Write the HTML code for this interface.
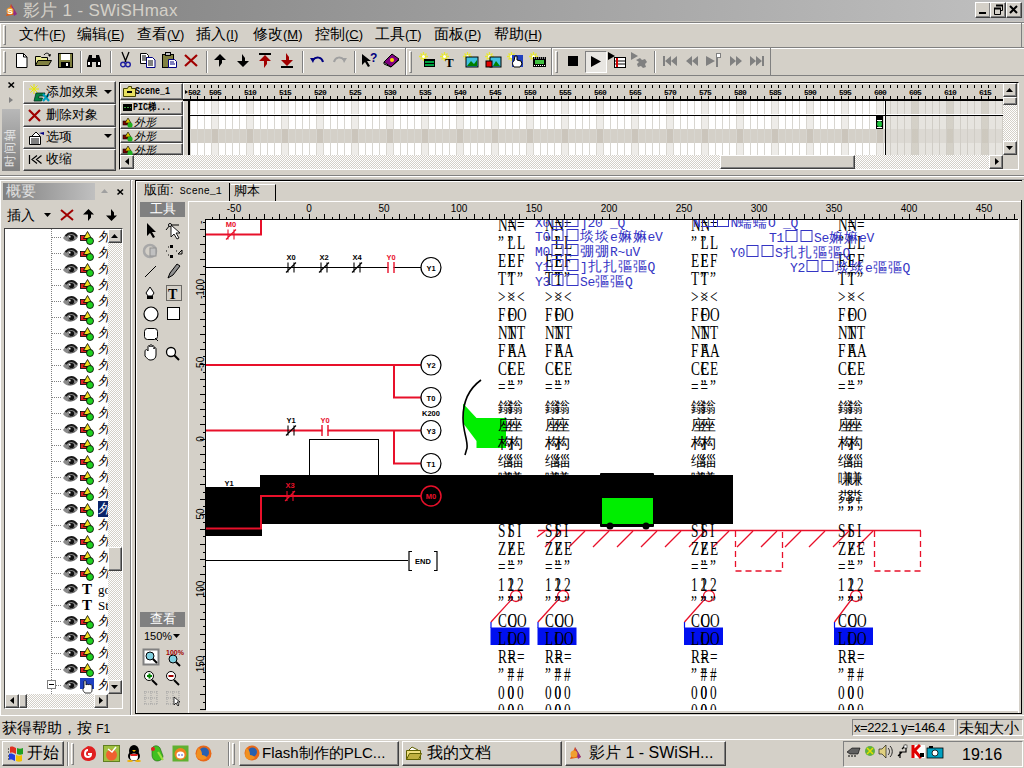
<!DOCTYPE html>
<html><head><meta charset="utf-8">
<style>
*{margin:0;padding:0;box-sizing:border-box}
html,body{width:1024px;height:768px;overflow:hidden;background:#d4d0c8;font-family:"Liberation Sans",sans-serif;font-size:12px;color:#000}
.a{position:absolute}
.rb{position:absolute;background:#d4d0c8;border:1px solid;border-color:#fff #404040 #404040 #fff;box-shadow:inset -1px -1px 0 #808080}
.sk{position:absolute;border:1px solid;border-color:#808080 #fff #fff #808080}
.grip{position:absolute;width:3px;border-left:1px solid #fff;border-top:1px solid #fff;border-right:1px solid #808080;border-bottom:1px solid #808080}
.sep{position:absolute;width:2px;border-left:1px solid #808080;border-right:1px solid #fff}
.t{position:absolute;white-space:nowrap;line-height:1}
svg{position:absolute;overflow:visible}
.tt{font-size:13px}
.tl{font-size:9px;font-family:"Liberation Mono",monospace}
.it{font-style:italic;font-size:11px;font-family:"Liberation Sans",sans-serif}
.fl{top:89px;font-size:8px;font-weight:bold;font-family:"Liberation Mono",monospace;letter-spacing:-0.8px;color:#000}
.fr{background-image:linear-gradient(to right,rgba(0,0,0,0) 22px,rgba(160,150,130,0.18) 22px 28px,rgba(0,0,0,0) 28px),linear-gradient(to right,#d8d6d0 1px,transparent 1px);background-size:35px 100%,7px 100%;}
.fr2{background-image:linear-gradient(to right,rgba(0,0,0,0) 27px,rgba(160,150,130,0.25) 27px 33px,rgba(0,0,0,0) 33px),linear-gradient(to right,#d0cdc6 1px,transparent 1px);background-size:35px 100%,7px 100%;background-position:0 0,5px 0}
.rl{font-size:10px;color:#000}
.lb{font-size:7.5px;font-weight:bold;font-family:"Liberation Sans",sans-serif}
.gs{font-family:"Liberation Serif",serif;font-size:18px;fill:#000}
.gc{font-family:"Liberation Serif",serif;font-size:15px;fill:#000}
.bc{font-size:14px;fill:#3434c4}
.bt{font-family:"Liberation Mono",monospace;font-size:13px;fill:#3434c4}
.mn{top:26px;font-size:15px}
.mn i{font-style:normal;font-size:13px;font-family:"Liberation Sans",sans-serif}
.hatch{background-color:#d4d0c8;background-image:repeating-conic-gradient(#fff 0 25%,#d4d0c8 0 50%);background-size:2px 2px}
</style></head><body>
<!-- TITLE BAR -->
<div class="a" style="left:0;top:0;width:1024px;height:21px;background:linear-gradient(to right,#808080,#c0c0c0)"></div>
<svg style="left:3px;top:2px" width="17" height="17" viewBox="0 0 17 17"><path d="M3 14 L8 2 L14 12 Z" fill="#e05a10"/><path d="M8 2 L14 12 L11 14Z" fill="#8a2d8a"/><circle cx="7" cy="9" r="3.5" fill="#f0a030"/><text x="4.5" y="12" font-size="8" font-weight="bold" fill="#fff" font-family="Liberation Sans">S</text></svg>
<div class="t" style="left:23px;top:2px;font-size:17px;color:#d4d0c8;letter-spacing:0.3px">影片 1 - SWiSHmax</div>
<div class="rb" style="left:975px;top:2px;width:16px;height:16px"></div>
<div class="rb" style="left:990px;top:2px;width:16px;height:16px"></div>
<div class="rb" style="left:1006px;top:2px;width:16px;height:16px"></div>
<div class="a" style="left:979px;top:12px;width:7px;height:2px;background:#000"></div>
<svg style="left:992px;top:4px" width="12" height="12"><path d="M4.5 1.5h6v5h-2M2.5 4.5h6v6h-6z" fill="none" stroke="#000" stroke-width="1"/><path d="M4 1.5h7M2 4.5h7" stroke="#000" stroke-width="2"/></svg>
<svg style="left:1009px;top:5px" width="10" height="10"><path d="M1 1L8 8M8 1L1 8" stroke="#000" stroke-width="2"/></svg>
<!-- MENU BAR -->
<div class="a" style="left:0;top:21px;width:1024px;height:1px;background:#c8c5bf"></div>
<div class="a" style="left:0;top:22px;width:1024px;height:1px;background:#808080"></div>
<div class="a" style="left:0;top:23px;width:1024px;height:25px;border-top:1px solid #fff;border-bottom:1px solid #808080;border-left:1px solid #fff"></div>
<div class="grip" style="left:3px;top:25px;height:20px"></div>
<div class="t mn" style="left:19px">文件<i>(<u>F</u>)</i></div>
<div class="t mn" style="left:77px">编辑<i>(<u>E</u>)</i></div>
<div class="t mn" style="left:137px">查看<i>(<u>V</u>)</i></div>
<div class="t mn" style="left:196px">插入<i>(<u>I</u>)</i></div>
<div class="t mn" style="left:253px">修改<i>(<u>M</u>)</i></div>
<div class="t mn" style="left:315px">控制<i>(<u>C</u>)</i></div>
<div class="t mn" style="left:375px">工具<i>(<u>T</u>)</i></div>
<div class="t mn" style="left:434px">面板<i>(<u>P</u>)</i></div>
<div class="t mn" style="left:494px">帮助<i>(<u>H</u>)</i></div>
<div class="a" style="left:1021px;top:23px;width:1px;height:24px;background:#808080"></div>
<!-- TOOLBAR -->
<div class="a" style="left:0;top:48px;width:1024px;height:28px;border-top:1px solid #fff;border-bottom:1px solid #808080"></div>
<div class="a" style="left:0;top:48px;width:1px;height:27px;background:#fff"></div>
<div class="a" style="left:405px;top:48px;width:1px;height:27px;background:#808080"></div>
<div class="a" style="left:406px;top:48px;width:1px;height:27px;background:#fff"></div>
<div class="a" style="left:551px;top:48px;width:1px;height:27px;background:#808080"></div>
<div class="a" style="left:552px;top:48px;width:1px;height:27px;background:#fff"></div>
<div class="a" style="left:770px;top:48px;width:1px;height:27px;background:#808080"></div>
<div class="grip" style="left:3px;top:51px;height:22px"></div>
<div class="grip" style="left:409px;top:51px;height:22px"></div>
<div class="grip" style="left:555px;top:51px;height:22px"></div>
<div class="sep" style="left:80px;top:51px;height:22px"></div>
<div class="sep" style="left:110px;top:51px;height:22px"></div>
<div class="sep" style="left:206px;top:51px;height:22px"></div>
<div class="sep" style="left:302px;top:51px;height:22px"></div>
<div class="sep" style="left:354px;top:51px;height:22px"></div>
<div class="sep" style="left:654px;top:51px;height:22px"></div>
<div id="tbicons">
<!-- new -->
<svg style="left:16px;top:53px" width="12" height="15"><path d="M0.5 0.5h7l3.5 3.5v10.5h-10.5z" fill="#fff" stroke="#000"/><path d="M7.5 0.5v3.5h3.5" fill="none" stroke="#000"/></svg>
<!-- open -->
<svg style="left:35px;top:52px" width="17" height="16"><path d="M0.5 4.5h5l1 1h6v8h-12z" fill="#e8e890" stroke="#000"/><path d="M3 8.5h13.5l-3 5h-13z" fill="#808040" stroke="#000"/><path d="M9 3c2-3 5-2 6 1" fill="none" stroke="#000"/><path d="M13 3l2 2 1-3" fill="#000"/></svg>
<!-- save -->
<svg style="left:58px;top:53px" width="15" height="15"><rect x="0.5" y="0.5" width="14" height="14" fill="#808040" stroke="#000"/><rect x="3" y="1" width="9" height="6" fill="#fff"/><rect x="3" y="9" width="9" height="5" fill="#000"/><rect x="8" y="10" width="2" height="3" fill="#fff"/></svg>
<!-- binoculars -->
<svg style="left:86px;top:53px" width="17" height="15"><path d="M1 14V8l2-6h3v12zM10 14V2h3l2 6v6z" fill="#000"/><rect x="6" y="5" width="4" height="4" fill="#000"/><rect x="2" y="9" width="2" height="3" fill="#fff"/><rect x="12" y="9" width="2" height="3" fill="#fff"/></svg>
<!-- scissors -->
<svg style="left:120px;top:52px" width="11" height="16"><path d="M2 0L6 10M9 0L5 10" stroke="#000" stroke-width="1.3"/><circle cx="3" cy="12.5" r="2.3" fill="none" stroke="#2020a0" stroke-width="1.4"/><circle cx="8" cy="12.5" r="2.3" fill="none" stroke="#2020a0" stroke-width="1.4"/></svg>
<!-- copy -->
<svg style="left:140px;top:53px" width="16" height="15"><path d="M0.5 0.5h6l2 2v8h-8z" fill="#fff" stroke="#000"/><path d="M6.5 4.5h6l2.5 2.5v7.5h-8.5z" fill="#fff" stroke="#000080"/><path d="M2 3h4M2 5h5M2 7h5M8 8h5M8 10h5M8 12h5" stroke="#000" stroke-width="1"/></svg>
<!-- paste -->
<svg style="left:162px;top:52px" width="15" height="16"><rect x="0.5" y="2.5" width="11" height="13" fill="#808040" stroke="#000"/><rect x="3.5" y="0.5" width="5" height="3" fill="#c0c0c0" stroke="#000"/><path d="M6.5 7.5h6l2 2v6h-8z" fill="#fff" stroke="#000080"/><path d="M8 10h4M8 12h5" stroke="#000080"/></svg>
<!-- delete -->
<svg style="left:184px;top:54px" width="14" height="13"><path d="M1 1L13 12M13 1L1 12" stroke="#a00000" stroke-width="2.2"/></svg>
<!-- up -->
<svg style="left:214px;top:54px" width="12" height="13"><path d="M6 0L12 6H8v3l-3 4V6H0z" fill="#000"/></svg>
<!-- down -->
<svg style="left:237px;top:54px" width="12" height="13"><path d="M6 13L12 7H8V4L5 0v7H0z" fill="#000"/></svg>
<!-- up top -->
<svg style="left:259px;top:53px" width="12" height="15"><rect x="0" y="0" width="12" height="2" fill="#000"/><path d="M6 2L12 8H8v3l-3 4V8H0z" fill="#a00000"/></svg>
<!-- down bottom -->
<svg style="left:281px;top:53px" width="12" height="15"><rect x="0" y="13" width="12" height="2" fill="#000"/><path d="M6 13L12 7H8V4L5 0v7H0z" fill="#a00000"/></svg>
<!-- undo -->
<svg style="left:310px;top:56px" width="14" height="10"><path d="M3 4c3-4 9-3 10 2" fill="none" stroke="#000080" stroke-width="2"/><path d="M0 2l5 0 -2 5z" fill="#000080"/></svg>
<!-- redo -->
<svg style="left:333px;top:56px" width="14" height="10"><path d="M11 4c-3-4-9-3-10 2" fill="none" stroke="#a0a0a0" stroke-width="2"/><path d="M14 2l-5 0 2 5z" fill="#a0a0a0"/></svg>
<!-- help arrow -->
<svg style="left:362px;top:52px" width="16" height="16"><path d="M0 2v11l3-3 3 5 2-1-3-5h4z" fill="#000"/><text x="8" y="10" font-size="12" font-weight="bold" fill="#000080" font-family="Liberation Sans">?</text></svg>
<!-- book -->
<svg style="left:383px;top:53px" width="17" height="15"><path d="M1 9L9 1l7 5-8 8z" fill="#800080" stroke="#000"/><path d="M1 9v2l7 3 8-7" fill="none" stroke="#000"/><circle cx="9" cy="7" r="2" fill="#ffd700"/></svg>
<!-- add text sparkles icons -->
<svg style="left:419px;top:52px" width="17" height="16"><path d="M4.5 0v9M0 4.5h9M1.5 1.5l6 6M7.5 1.5l-6 6" stroke="#e8e830" stroke-width="1.3"/><circle cx="4.5" cy="4.5" r="1.5" fill="#fff"/><rect x="5" y="7" width="11" height="8" fill="#000"/><rect x="6" y="9" width="9" height="2" fill="#00a040"/><rect x="6" y="12" width="9" height="2" fill="#00a040"/></svg>
<svg style="left:440px;top:52px" width="16" height="16"><path d="M4.5 0v9M0 4.5h9M1.5 1.5l6 6M7.5 1.5l-6 6" stroke="#e8e830" stroke-width="1.3"/><circle cx="4.5" cy="4.5" r="1.5" fill="#fff"/><text x="5" y="15" font-size="13" font-weight="bold" font-family="Liberation Serif" fill="#000">T</text></svg>
<svg style="left:463px;top:52px" width="15" height="16"><path d="M4.5 0v9M0 4.5h9M1.5 1.5l6 6M7.5 1.5l-6 6" stroke="#e8e830" stroke-width="1.3"/><circle cx="4.5" cy="4.5" r="1.5" fill="#fff"/><rect x="3" y="5" width="12" height="10" fill="#40c0e0" stroke="#000"/><path d="M4 14l4-5 3 3 3-4v6z" fill="#008000"/></svg>
<svg style="left:485px;top:52px" width="16" height="16"><path d="M4.5 0v9M0 4.5h9M1.5 1.5l6 6M7.5 1.5l-6 6" stroke="#e8e830" stroke-width="1.3"/><circle cx="4.5" cy="4.5" r="1.5" fill="#fff"/><rect x="5" y="5" width="11" height="10" fill="#40c0e0" stroke="#000"/><rect x="1" y="9" width="6" height="6" fill="#e00000" stroke="#000"/><path d="M8 14l3-5 4 5z" fill="#008000"/></svg>
<svg style="left:507px;top:52px" width="17" height="16"><path d="M4.5 0v9M0 4.5h9M1.5 1.5l6 6M7.5 1.5l-6 6" stroke="#e8e830" stroke-width="1.3"/><circle cx="4.5" cy="4.5" r="1.5" fill="#fff"/><rect x="5" y="3" width="11" height="12" fill="#2040c0"/><path d="M7 15c-2-3-2-5 0-6l1-5 2 0v4l4 1 1 3-2 3z" fill="#fff" stroke="#000"/></svg>
<svg style="left:529px;top:52px" width="17" height="16"><path d="M4.5 0v9M0 4.5h9M1.5 1.5l6 6M7.5 1.5l-6 6" stroke="#e8e830" stroke-width="1.3"/><circle cx="4.5" cy="4.5" r="1.5" fill="#fff"/><rect x="4" y="5" width="13" height="10" fill="#000"/><rect x="6" y="8" width="9" height="4" fill="#40c040"/><path d="M5 6h1M7 6h1M9 6h1M11 6h1M13 6h1M15 6h1M5 13.5h1M7 13.5h1M9 13.5h1M11 13.5h1M13 13.5h1M15 13.5h1" stroke="#fff"/></svg>
<!-- stop -->
<div class="a" style="left:568px;top:56px;width:10px;height:10px;background:#000"></div>
<!-- play pressed -->
<div class="a" style="left:585px;top:51px;width:22px;height:22px;border:1px solid;border-color:#808080 #fff #fff #808080;background:#e8e6e2"></div>
<svg style="left:591px;top:56px" width="10" height="11"><path d="M0 0L10 5.5L0 11z" fill="#000"/></svg>
<svg style="left:608px;top:52px" width="18" height="16"><path d="M0 0L7 4L0 8z" fill="#000"/><rect x="6.5" y="5.5" width="11" height="10" fill="#fff" stroke="#000"/><path d="M7 9h10M7 12h10" stroke="#000"/><path d="M9 6v9" stroke="#d00000" stroke-width="2"/></svg>
<svg style="left:631px;top:52px" width="17" height="16"><path d="M0 0L7 4L0 8z" fill="#808080"/><path d="M5 8l4-2 2 2 3-1 2 3-2 2 1 3-3 1-2-2-3 1-1-3 2-2z" fill="#808080"/></svg>
<!-- nav -->
<svg style="left:663px;top:55px" width="14" height="11"><rect x="0" y="1" width="2" height="10" fill="#808080"/><path d="M8 1L2 6L8 11zM14 1L8 6L14 11z" fill="#808080"/></svg>
<svg style="left:686px;top:55px" width="12" height="11"><path d="M6 1L0 6L6 11zM12 1L6 6L12 11z" fill="#808080"/></svg>
<svg style="left:706px;top:53px" width="16" height="14"><path d="M0 3L9 8L0 13z" fill="#808080"/><rect x="10" y="0" width="2" height="14" fill="#808080"/><rect x="10" y="0" width="5" height="5" fill="#808080"/><rect x="11" y="1" width="3" height="3" fill="#fff"/></svg>
<svg style="left:730px;top:55px" width="12" height="11"><path d="M0 1L6 6L0 11zM6 1L12 6L6 11z" fill="#808080"/></svg>
<svg style="left:750px;top:55px" width="14" height="11"><path d="M0 1L6 6L0 11zM6 1L12 6L6 11z" fill="#808080"/><rect x="12" y="1" width="2" height="10" fill="#808080"/></svg>
</div>
<!-- TIMELINE PANEL -->
<div class="a" style="left:0;top:76px;width:1024px;height:99px;background:#d4d0c8"></div>
<svg style="left:8px;top:82px" width="7" height="6"><path d="M0.5 0.5L6 5.5M6 0.5L0.5 5.5" stroke="#000" stroke-width="1.6"/></svg>
<svg style="left:9px;top:97px" width="4" height="6"><path d="M0 0L4 3L0 6z" fill="#808080"/></svg>
<div class="a" style="left:2px;top:109px;width:18px;height:62px;background:linear-gradient(to bottom,#b8b8b8,#808080)"></div>
<div class="t" style="left:4px;top:167px;font-size:12px;color:#e8e8e8;transform:rotate(-90deg);transform-origin:0 0;letter-spacing:1px">时间轴</div>
<div class="rb tb" style="left:23px;top:81px;width:93px;height:23px"></div>
<div class="rb tb" style="left:23px;top:104px;width:93px;height:23px"></div>
<div class="rb tb" style="left:23px;top:127px;width:93px;height:22px"></div>
<div class="rb tb" style="left:23px;top:149px;width:93px;height:22px"></div>
<svg style="left:29px;top:84px" width="22" height="18"><path d="M5 0v10M0 5h10M1.5 1.5l7 7M8.5 1.5l-7 7" stroke="#e8e800" stroke-width="1"/><path d="M5 17l2-8h9l-1 3h-5l-0.5 2h4l-1 3z" fill="#008040" stroke="#003020" stroke-width="0.8"/><path d="M14 10l6 7M20 10l-6 7" stroke="#00a0c0" stroke-width="2.2"/></svg>
<div class="t tt" style="left:46px;top:85px">添加效果</div>
<svg style="left:104px;top:90px" width="8" height="4"><path d="M0 0h8L4 4z" fill="#000"/></svg>
<svg style="left:28px;top:109px" width="13" height="13"><path d="M1 1L12 12M12 1L1 12" stroke="#a00000" stroke-width="2.2"/></svg>
<div class="t tt" style="left:46px;top:108px">删除对象</div>
<svg style="left:29px;top:131px" width="16" height="14"><path d="M0.5 5.5h11v8h-11z" fill="#fff" stroke="#000"/><path d="M2 8h8M2 10h8M2 12h8" stroke="#000"/><path d="M3 5l4-4 4 4" fill="#fff" stroke="#000"/><path d="M10 2l5-1v3z" fill="#000080"/></svg>
<div class="t tt" style="left:46px;top:130px">选项</div>
<svg style="left:104px;top:134px" width="8" height="4"><path d="M0 0h8L4 4z" fill="#000"/></svg>
<svg style="left:29px;top:155px" width="13" height="9"><path d="M0.5 0v9M8 0.5L3 4.5L8 8.5M12.5 0.5L7.5 4.5L12.5 8.5" fill="none" stroke="#000" stroke-width="1.2"/></svg>
<div class="t tt" style="left:46px;top:152px">收缩</div>
<!-- timeline frame -->
<div class="a" style="left:119px;top:82px;width:900px;height:88px;border-top:1px solid #000;border-left:1px solid #000;border-right:1px solid #fff;border-bottom:1px solid #fff"></div>
<div class="rb" style="left:120px;top:83px;width:63px;height:17px"></div>
<div class="rb" style="left:120px;top:101px;width:63px;height:14px"></div>
<div class="rb" style="left:120px;top:115px;width:63px;height:14px"></div>
<div class="rb" style="left:120px;top:129px;width:63px;height:14px"></div>
<div class="rb" style="left:120px;top:143px;width:63px;height:12px"></div>
<svg style="left:123px;top:86px" width="13" height="11"><path d="M0.5 2.5h4l1-2h3v2h4v8h-12z" fill="#e8e060" stroke="#404000"/><path d="M4 5h5v2h-5z" fill="#000"/></svg>
<div class="t tl" style="left:135px;top:87px;font-weight:bold;font-size:10px;transform:scaleX(0.83);transform-origin:0 0">Scene_1</div>
<svg style="left:123px;top:104px" width="9" height="7"><rect width="9" height="7" fill="#000"/><rect x="1" y="3" width="2" height="1" fill="#40a040"/><rect x="4" y="3" width="2" height="1" fill="#40a040"/><rect x="7" y="3" width="1" height="1" fill="#40a040"/></svg>
<div class="t tl" style="left:133px;top:103px;font-weight:bold;font-size:10px;transform:scaleX(0.83);transform-origin:0 0">PIC梯...</div>
<svg class="shp" style="left:123px;top:118px" width="10" height="10"><rect x="0" y="3" width="5" height="4" fill="#800000" stroke="#000" stroke-width="0.6"/><path d="M5 0L8 5H2z" fill="#e0c000" stroke="#000" stroke-width="0.6"/><circle cx="7" cy="7" r="2.6" fill="#20b020"/></svg>
<div class="t tl it" style="left:134px;top:117px">外形</div>
<svg class="shp" style="left:123px;top:132px" width="10" height="10"><rect x="0" y="3" width="5" height="4" fill="#800000" stroke="#000" stroke-width="0.6"/><path d="M5 0L8 5H2z" fill="#e0c000" stroke="#000" stroke-width="0.6"/><circle cx="7" cy="7" r="2.6" fill="#20b020"/></svg>
<div class="t tl it" style="left:134px;top:131px">外形</div>
<div class="a" style="left:120px;top:143px;width:63px;height:12px;overflow:hidden"><svg style="left:3px;top:3px" width="10" height="10"><rect x="0" y="3" width="5" height="4" fill="#800000" stroke="#000" stroke-width="0.6"/><path d="M5 0L8 5H2z" fill="#e0c000" stroke="#000" stroke-width="0.6"/><circle cx="7" cy="7" r="2.6" fill="#20b020"/></svg><div class="t tl it" style="left:14px;top:2px">外形</div></div>
<!-- frame ruler -->
<div class="a" style="left:183px;top:83px;width:820px;height:16px;background:#d4d0c8;border-left:1px solid #fff;border-top:1px solid #fff"></div>
<div class="a" style="left:183px;top:99px;width:820px;height:2px;background:#000"></div>
<svg style="left:0;top:0" width="1024" height="120"><path d="M190.5 85v3M190.5 96v3M197.5 85v3M197.5 96v3M204.5 85v3M204.5 96v3M211.5 85v3M211.5 96v3M218.5 85v3M218.5 96v3M225.5 85v3M225.5 96v3M232.5 85v3M232.5 96v3M239.5 85v3M239.5 96v3M246.5 85v3M246.5 96v3M253.5 85v3M253.5 96v3M260.5 85v3M260.5 96v3M267.5 85v3M267.5 96v3M274.5 85v3M274.5 96v3M281.5 85v3M281.5 96v3M288.5 85v3M288.5 96v3M295.5 85v3M295.5 96v3M302.5 85v3M302.5 96v3M309.5 85v3M309.5 96v3M316.5 85v3M316.5 96v3M323.5 85v3M323.5 96v3M330.5 85v3M330.5 96v3M337.5 85v3M337.5 96v3M344.5 85v3M344.5 96v3M351.5 85v3M351.5 96v3M358.5 85v3M358.5 96v3M365.5 85v3M365.5 96v3M372.5 85v3M372.5 96v3M379.5 85v3M379.5 96v3M386.5 85v3M386.5 96v3M393.5 85v3M393.5 96v3M400.5 85v3M400.5 96v3M407.5 85v3M407.5 96v3M414.5 85v3M414.5 96v3M421.5 85v3M421.5 96v3M428.5 85v3M428.5 96v3M435.5 85v3M435.5 96v3M442.5 85v3M442.5 96v3M449.5 85v3M449.5 96v3M456.5 85v3M456.5 96v3M463.5 85v3M463.5 96v3M470.5 85v3M470.5 96v3M477.5 85v3M477.5 96v3M484.5 85v3M484.5 96v3M491.5 85v3M491.5 96v3M498.5 85v3M498.5 96v3M505.5 85v3M505.5 96v3M512.5 85v3M512.5 96v3M519.5 85v3M519.5 96v3M526.5 85v3M526.5 96v3M533.5 85v3M533.5 96v3M540.5 85v3M540.5 96v3M547.5 85v3M547.5 96v3M554.5 85v3M554.5 96v3M561.5 85v3M561.5 96v3M568.5 85v3M568.5 96v3M575.5 85v3M575.5 96v3M582.5 85v3M582.5 96v3M589.5 85v3M589.5 96v3M596.5 85v3M596.5 96v3M603.5 85v3M603.5 96v3M610.5 85v3M610.5 96v3M617.5 85v3M617.5 96v3M624.5 85v3M624.5 96v3M631.5 85v3M631.5 96v3M638.5 85v3M638.5 96v3M645.5 85v3M645.5 96v3M652.5 85v3M652.5 96v3M659.5 85v3M659.5 96v3M666.5 85v3M666.5 96v3M673.5 85v3M673.5 96v3M680.5 85v3M680.5 96v3M687.5 85v3M687.5 96v3M694.5 85v3M694.5 96v3M701.5 85v3M701.5 96v3M708.5 85v3M708.5 96v3M715.5 85v3M715.5 96v3M722.5 85v3M722.5 96v3M729.5 85v3M729.5 96v3M736.5 85v3M736.5 96v3M743.5 85v3M743.5 96v3M750.5 85v3M750.5 96v3M757.5 85v3M757.5 96v3M764.5 85v3M764.5 96v3M771.5 85v3M771.5 96v3M778.5 85v3M778.5 96v3M785.5 85v3M785.5 96v3M792.5 85v3M792.5 96v3M799.5 85v3M799.5 96v3M806.5 85v3M806.5 96v3M813.5 85v3M813.5 96v3M820.5 85v3M820.5 96v3M827.5 85v3M827.5 96v3M834.5 85v3M834.5 96v3M841.5 85v3M841.5 96v3M848.5 85v3M848.5 96v3M855.5 85v3M855.5 96v3M862.5 85v3M862.5 96v3M869.5 85v3M869.5 96v3M876.5 85v3M876.5 96v3M883.5 85v3M883.5 96v3M890.5 85v3M890.5 96v3M897.5 85v3M897.5 96v3M904.5 85v3M904.5 96v3M911.5 85v3M911.5 96v3M918.5 85v3M918.5 96v3M925.5 85v3M925.5 96v3M932.5 85v3M932.5 96v3M939.5 85v3M939.5 96v3M946.5 85v3M946.5 96v3M953.5 85v3M953.5 96v3M960.5 85v3M960.5 96v3M967.5 85v3M967.5 96v3M974.5 85v3M974.5 96v3M981.5 85v3M981.5 96v3M988.5 85v3M988.5 96v3M995.5 85v3M995.5 96v3" stroke="#000" stroke-width="1"/><path d="M185 90l3 2-3 2z" fill="#000"/></svg>
<div class="t fl" style="left:188px">502</div>
<div class="t fl" style="left:209px">505</div><div class="t fl" style="left:244px">510</div><div class="t fl" style="left:279px">515</div><div class="t fl" style="left:314px">520</div><div class="t fl" style="left:349px">525</div><div class="t fl" style="left:384px">530</div><div class="t fl" style="left:419px">535</div><div class="t fl" style="left:454px">540</div><div class="t fl" style="left:489px">545</div><div class="t fl" style="left:524px">550</div><div class="t fl" style="left:559px">555</div><div class="t fl" style="left:594px">560</div><div class="t fl" style="left:629px">565</div><div class="t fl" style="left:664px">570</div><div class="t fl" style="left:699px">575</div><div class="t fl" style="left:734px">580</div><div class="t fl" style="left:769px">585</div><div class="t fl" style="left:804px">590</div><div class="t fl" style="left:839px">595</div><div class="t fl" style="left:874px">600</div><div class="t fl" style="left:909px">605</div><div class="t fl" style="left:944px">610</div><div class="t fl" style="left:979px">615</div>
<!-- frames -->
<div class="a" style="left:183px;top:101px;width:5px;height:54px;background:#d4d0c8;border-left:1px solid #fff"></div>
<div class="a" style="left:188px;top:101px;width:2px;height:54px;background:#000"></div>
<div class="a fr" style="left:190px;top:101px;width:695px;height:13px;background-color:#fff"></div>
<div class="a" style="left:190px;top:114px;width:813px;height:1px;background:#fff"></div>
<div class="a" style="left:190px;top:115px;width:813px;height:1px;background:#000"></div>
<div class="a fr" style="left:190px;top:116px;width:695px;height:13px;background-color:#fff"></div>
<div class="a fr" style="left:190px;top:129px;width:695px;height:14px;background-color:#d4d0c8"></div>
<div class="a fr" style="left:190px;top:143px;width:695px;height:12px;background-color:#fff"></div>
<div class="a fr2" style="left:885px;top:101px;width:118px;height:13px;background-color:#e6e4df"></div>
<div class="a fr2" style="left:885px;top:116px;width:118px;height:13px;background-color:#e6e4df"></div>
<div class="a fr2" style="left:885px;top:129px;width:118px;height:14px;background-color:#dcd9d3"></div>
<div class="a fr2" style="left:885px;top:143px;width:118px;height:12px;background-color:#e6e4df"></div>
<div class="a" style="left:885px;top:101px;width:1px;height:54px;background:#000"></div>
<div class="a" style="left:876px;top:116px;width:7px;height:13px;background:#000"></div>
<div class="a" style="left:877px;top:120px;width:5px;height:8px;background:#fff"></div>
<div class="a" style="left:877px;top:121px;width:5px;height:6px;background:#000"></div>
<div class="a" style="left:877px;top:121px;width:5px;height:6px;border-radius:50%;background:#20c040"></div>
<!-- scrollbars -->
<div class="hatch a" style="left:134px;top:155px;width:855px;height:14px"></div>
<div class="rb" style="left:120px;top:155px;width:14px;height:14px"></div>
<svg style="left:125px;top:158px" width="4" height="7"><path d="M4 0L0 3.5L4 7z" fill="#000"/></svg>
<div class="rb" style="left:720px;top:155px;width:135px;height:14px"></div>
<div class="rb" style="left:989px;top:155px;width:14px;height:14px"></div>
<svg style="left:995px;top:158px" width="4" height="7"><path d="M0 0L4 3.5L0 7z" fill="#000"/></svg>
<div class="hatch a" style="left:1003px;top:83px;width:14px;height:72px"></div><div class="a" style="left:1003px;top:155px;width:14px;height:14px;background:#d4d0c8"></div>
<div class="rb" style="left:1003px;top:83px;width:14px;height:14px"></div>
<svg style="left:1006px;top:88px" width="7" height="4"><path d="M0 4L3.5 0L7 4z" fill="#000"/></svg>
<div class="rb" style="left:1003px;top:97px;width:14px;height:8px"></div>
<div class="rb" style="left:1003px;top:141px;width:14px;height:14px"></div>
<svg style="left:1006px;top:146px" width="7" height="4"><path d="M0 0L7 0L3.5 4z" fill="#000"/></svg>
<!-- LEFT PANEL 概要 -->
<div class="a" style="left:0;top:175px;width:1024px;height:1px;background:#808080"></div><div class="a" style="left:0;top:176px;width:1024px;height:1px;background:#fff"></div>
<div class="a" style="left:0;top:179px;width:1024px;height:1px;background:#a0a0a0"></div>
<div class="a" style="left:0;top:180px;width:133px;height:1px;background:#fff"></div>
<div class="a" style="left:0;top:180px;width:1px;height:535px;background:#fff"></div>
<div class="a" style="left:130px;top:180px;width:1px;height:535px;background:#808080"></div><div class="a" style="left:131px;top:180px;width:1px;height:535px;background:#fff"></div>
<div class="a" style="left:3px;top:183px;width:92px;height:17px;background:linear-gradient(to right,#808080,#c0c0c0)"></div>
<div class="t" style="left:6px;top:183px;font-size:15px;color:#e0e0e0">概要</div>
<svg style="left:101px;top:189px" width="7" height="4"><path d="M0 4L3.5 0L7 4z" fill="#a0a0a0"/></svg>
<svg style="left:117px;top:189px" width="7" height="6"><path d="M0.5 0.5L6 5.5M6 0.5L0.5 5.5" stroke="#000" stroke-width="1.6"/></svg>
<div class="t" style="left:7px;top:208px;font-size:14px">插入</div>
<svg style="left:44px;top:213px" width="7" height="4"><path d="M0 0h7L3.5 4z" fill="#000"/></svg>
<svg style="left:60px;top:209px" width="14" height="12"><path d="M1 1L13 11M13 1L1 11" stroke="#a00000" stroke-width="2"/></svg>
<svg style="left:83px;top:209px" width="11" height="12"><path d="M5.5 0L11 5.5H8v3L5 12V5.5H0z" fill="#000"/></svg>
<svg style="left:106px;top:209px" width="11" height="12"><path d="M5.5 12L11 6.5H8V3.5L5 0v6.5H0z" fill="#000"/></svg>
<div class="a" style="left:4px;top:228px;width:119px;height:481px;background:#fff;border:1px solid;border-color:#404040 #fff #fff #404040"></div>
<div class="a" style="left:51px;top:229px;width:1px;height:465px;background:repeating-linear-gradient(to bottom,#808080 0 1px,transparent 1px 2px)"></div>
<svg width="0" height="0" style="left:0;top:0"><defs>
<g id="eye"><path d="M0 6C3 0 12 -1 15 5C12 11 3 11 0 6z" fill="#8a8a8a"/><path d="M2.5 4C6 0 11 0 14 4.5" fill="none" stroke="#1a1a1a" stroke-width="2"/><path d="M5 8c2 1 5 1 7 -1" fill="none" stroke="#555" stroke-width="1"/><circle cx="8.5" cy="5.5" r="2.6" fill="#111"/><rect x="6" y="4" width="1.5" height="1.5" fill="#fff"/></g>
<g id="shp"><rect x="0.5" y="4.5" width="6" height="5" fill="#e02020" stroke="#000" stroke-width="0.8"/><path d="M7.5 0.5L11.5 7.5H3.5z" fill="#f0e020" stroke="#000" stroke-width="0.8"/><circle cx="10" cy="10" r="3.5" fill="#20d020" stroke="#000" stroke-width="0.8"/></g>
</defs></svg>
<div class="a" style="left:52px;top:237px;width:10px;height:1px;background:repeating-linear-gradient(to right,#808080 0 1px,transparent 1px 2px)"></div><svg style="left:63px;top:232px" width="15" height="11"><use href="#eye"/></svg><svg style="left:80px;top:231px" width="15" height="14"><use href="#shp"/></svg><div class="t it" style="left:98px;top:230px;font-size:13px">外</div><div class="a" style="left:52px;top:253px;width:10px;height:1px;background:repeating-linear-gradient(to right,#808080 0 1px,transparent 1px 2px)"></div><svg style="left:63px;top:248px" width="15" height="11"><use href="#eye"/></svg><svg style="left:80px;top:247px" width="15" height="14"><use href="#shp"/></svg><div class="t it" style="left:98px;top:246px;font-size:13px">外</div><div class="a" style="left:52px;top:269px;width:10px;height:1px;background:repeating-linear-gradient(to right,#808080 0 1px,transparent 1px 2px)"></div><svg style="left:63px;top:264px" width="15" height="11"><use href="#eye"/></svg><svg style="left:80px;top:263px" width="15" height="14"><use href="#shp"/></svg><div class="t it" style="left:98px;top:262px;font-size:13px">外</div><div class="a" style="left:52px;top:285px;width:10px;height:1px;background:repeating-linear-gradient(to right,#808080 0 1px,transparent 1px 2px)"></div><svg style="left:63px;top:280px" width="15" height="11"><use href="#eye"/></svg><svg style="left:80px;top:279px" width="15" height="14"><use href="#shp"/></svg><div class="t it" style="left:98px;top:278px;font-size:13px">外</div><div class="a" style="left:52px;top:301px;width:10px;height:1px;background:repeating-linear-gradient(to right,#808080 0 1px,transparent 1px 2px)"></div><svg style="left:63px;top:296px" width="15" height="11"><use href="#eye"/></svg><svg style="left:80px;top:295px" width="15" height="14"><use href="#shp"/></svg><div class="t it" style="left:98px;top:294px;font-size:13px">外</div><div class="a" style="left:52px;top:317px;width:10px;height:1px;background:repeating-linear-gradient(to right,#808080 0 1px,transparent 1px 2px)"></div><svg style="left:63px;top:312px" width="15" height="11"><use href="#eye"/></svg><svg style="left:80px;top:311px" width="15" height="14"><use href="#shp"/></svg><div class="t it" style="left:98px;top:310px;font-size:13px">外</div><div class="a" style="left:52px;top:333px;width:10px;height:1px;background:repeating-linear-gradient(to right,#808080 0 1px,transparent 1px 2px)"></div><svg style="left:63px;top:328px" width="15" height="11"><use href="#eye"/></svg><svg style="left:80px;top:327px" width="15" height="14"><use href="#shp"/></svg><div class="t it" style="left:98px;top:326px;font-size:13px">外</div><div class="a" style="left:52px;top:349px;width:10px;height:1px;background:repeating-linear-gradient(to right,#808080 0 1px,transparent 1px 2px)"></div><svg style="left:63px;top:344px" width="15" height="11"><use href="#eye"/></svg><svg style="left:80px;top:343px" width="15" height="14"><use href="#shp"/></svg><div class="t it" style="left:98px;top:342px;font-size:13px">外</div><div class="a" style="left:52px;top:365px;width:10px;height:1px;background:repeating-linear-gradient(to right,#808080 0 1px,transparent 1px 2px)"></div><svg style="left:63px;top:360px" width="15" height="11"><use href="#eye"/></svg><svg style="left:80px;top:359px" width="15" height="14"><use href="#shp"/></svg><div class="t it" style="left:98px;top:358px;font-size:13px">外</div><div class="a" style="left:52px;top:381px;width:10px;height:1px;background:repeating-linear-gradient(to right,#808080 0 1px,transparent 1px 2px)"></div><svg style="left:63px;top:376px" width="15" height="11"><use href="#eye"/></svg><svg style="left:80px;top:375px" width="15" height="14"><use href="#shp"/></svg><div class="t it" style="left:98px;top:374px;font-size:13px">外</div><div class="a" style="left:52px;top:397px;width:10px;height:1px;background:repeating-linear-gradient(to right,#808080 0 1px,transparent 1px 2px)"></div><svg style="left:63px;top:392px" width="15" height="11"><use href="#eye"/></svg><svg style="left:80px;top:391px" width="15" height="14"><use href="#shp"/></svg><div class="t it" style="left:98px;top:390px;font-size:13px">外</div><div class="a" style="left:52px;top:413px;width:10px;height:1px;background:repeating-linear-gradient(to right,#808080 0 1px,transparent 1px 2px)"></div><svg style="left:63px;top:408px" width="15" height="11"><use href="#eye"/></svg><svg style="left:80px;top:407px" width="15" height="14"><use href="#shp"/></svg><div class="t it" style="left:98px;top:406px;font-size:13px">外</div><div class="a" style="left:52px;top:429px;width:10px;height:1px;background:repeating-linear-gradient(to right,#808080 0 1px,transparent 1px 2px)"></div><svg style="left:63px;top:424px" width="15" height="11"><use href="#eye"/></svg><svg style="left:80px;top:423px" width="15" height="14"><use href="#shp"/></svg><div class="t it" style="left:98px;top:422px;font-size:13px">外</div><div class="a" style="left:52px;top:445px;width:10px;height:1px;background:repeating-linear-gradient(to right,#808080 0 1px,transparent 1px 2px)"></div><svg style="left:63px;top:440px" width="15" height="11"><use href="#eye"/></svg><svg style="left:80px;top:439px" width="15" height="14"><use href="#shp"/></svg><div class="t it" style="left:98px;top:438px;font-size:13px">外</div><div class="a" style="left:52px;top:461px;width:10px;height:1px;background:repeating-linear-gradient(to right,#808080 0 1px,transparent 1px 2px)"></div><svg style="left:63px;top:456px" width="15" height="11"><use href="#eye"/></svg><svg style="left:80px;top:455px" width="15" height="14"><use href="#shp"/></svg><div class="t it" style="left:98px;top:454px;font-size:13px">外</div><div class="a" style="left:52px;top:477px;width:10px;height:1px;background:repeating-linear-gradient(to right,#808080 0 1px,transparent 1px 2px)"></div><svg style="left:63px;top:472px" width="15" height="11"><use href="#eye"/></svg><svg style="left:80px;top:471px" width="15" height="14"><use href="#shp"/></svg><div class="t it" style="left:98px;top:470px;font-size:13px">外</div><div class="a" style="left:52px;top:493px;width:10px;height:1px;background:repeating-linear-gradient(to right,#808080 0 1px,transparent 1px 2px)"></div><svg style="left:63px;top:488px" width="15" height="11"><use href="#eye"/></svg><svg style="left:80px;top:487px" width="15" height="14"><use href="#shp"/></svg><div class="t it" style="left:98px;top:486px;font-size:13px">外</div><div class="a" style="left:52px;top:509px;width:10px;height:1px;background:repeating-linear-gradient(to right,#808080 0 1px,transparent 1px 2px)"></div><svg style="left:63px;top:504px" width="15" height="11"><use href="#eye"/></svg><svg style="left:80px;top:503px" width="15" height="14"><use href="#shp"/></svg><div class="a" style="left:98px;top:501px;width:10px;height:16px;background:#0a246a"></div><div class="t it" style="left:98px;top:502px;font-size:13px;color:#fff">外</div><div class="a" style="left:52px;top:525px;width:10px;height:1px;background:repeating-linear-gradient(to right,#808080 0 1px,transparent 1px 2px)"></div><svg style="left:63px;top:520px" width="15" height="11"><use href="#eye"/></svg><svg style="left:80px;top:519px" width="15" height="14"><use href="#shp"/></svg><div class="t it" style="left:98px;top:518px;font-size:13px">外</div><div class="a" style="left:52px;top:541px;width:10px;height:1px;background:repeating-linear-gradient(to right,#808080 0 1px,transparent 1px 2px)"></div><svg style="left:63px;top:536px" width="15" height="11"><use href="#eye"/></svg><svg style="left:80px;top:535px" width="15" height="14"><use href="#shp"/></svg><div class="t it" style="left:98px;top:534px;font-size:13px">外</div><div class="a" style="left:52px;top:557px;width:10px;height:1px;background:repeating-linear-gradient(to right,#808080 0 1px,transparent 1px 2px)"></div><svg style="left:63px;top:552px" width="15" height="11"><use href="#eye"/></svg><svg style="left:80px;top:551px" width="15" height="14"><use href="#shp"/></svg><div class="t it" style="left:98px;top:550px;font-size:13px">外</div><div class="a" style="left:52px;top:573px;width:10px;height:1px;background:repeating-linear-gradient(to right,#808080 0 1px,transparent 1px 2px)"></div><svg style="left:63px;top:568px" width="15" height="11"><use href="#eye"/></svg><svg style="left:80px;top:567px" width="15" height="14"><use href="#shp"/></svg><div class="t it" style="left:98px;top:566px;font-size:13px">外</div><div class="a" style="left:52px;top:589px;width:10px;height:1px;background:repeating-linear-gradient(to right,#808080 0 1px,transparent 1px 2px)"></div><svg style="left:63px;top:584px" width="15" height="11"><use href="#eye"/></svg><div class="t" style="left:82px;top:582px;font-family:'Liberation Serif',serif;font-weight:bold;font-size:15px">T</div><div class="t" style="left:98px;top:583px;font-family:'Liberation Serif',serif;font-size:13px">go</div><div class="a" style="left:52px;top:605px;width:10px;height:1px;background:repeating-linear-gradient(to right,#808080 0 1px,transparent 1px 2px)"></div><svg style="left:63px;top:600px" width="15" height="11"><use href="#eye"/></svg><div class="t" style="left:82px;top:598px;font-family:'Liberation Serif',serif;font-weight:bold;font-size:15px">T</div><div class="t" style="left:98px;top:599px;font-family:'Liberation Serif',serif;font-size:13px">St</div><div class="a" style="left:52px;top:621px;width:10px;height:1px;background:repeating-linear-gradient(to right,#808080 0 1px,transparent 1px 2px)"></div><svg style="left:63px;top:616px" width="15" height="11"><use href="#eye"/></svg><svg style="left:80px;top:615px" width="15" height="14"><use href="#shp"/></svg><div class="t it" style="left:98px;top:614px;font-size:13px">外</div><div class="a" style="left:52px;top:637px;width:10px;height:1px;background:repeating-linear-gradient(to right,#808080 0 1px,transparent 1px 2px)"></div><svg style="left:63px;top:632px" width="15" height="11"><use href="#eye"/></svg><svg style="left:80px;top:631px" width="15" height="14"><use href="#shp"/></svg><div class="t it" style="left:98px;top:630px;font-size:13px">外</div><div class="a" style="left:52px;top:653px;width:10px;height:1px;background:repeating-linear-gradient(to right,#808080 0 1px,transparent 1px 2px)"></div><svg style="left:63px;top:648px" width="15" height="11"><use href="#eye"/></svg><svg style="left:80px;top:647px" width="15" height="14"><use href="#shp"/></svg><div class="t it" style="left:98px;top:646px;font-size:13px">外</div><div class="a" style="left:52px;top:669px;width:10px;height:1px;background:repeating-linear-gradient(to right,#808080 0 1px,transparent 1px 2px)"></div><svg style="left:63px;top:664px" width="15" height="11"><use href="#eye"/></svg><svg style="left:80px;top:663px" width="15" height="14"><use href="#shp"/></svg><div class="t it" style="left:98px;top:662px;font-size:13px">外</div><div class="a" style="left:52px;top:685px;width:10px;height:1px;background:repeating-linear-gradient(to right,#808080 0 1px,transparent 1px 2px)"></div><svg style="left:63px;top:680px" width="15" height="11"><use href="#eye"/></svg><svg style="left:80px;top:678px" width="14" height="15"><rect x="0" y="0" width="14" height="11" fill="#2040c0"/><path d="M5 15c-2-2-3-4-1-5v-6c0-2 2-2 2 0v3c1-1 2-1 2 0c1-1 2-1 2 0c1-1 2 0 2 1v4c0 2-1 3-2 3z" fill="#fff" stroke="#000" stroke-width="0.8"/></svg><div class="t it" style="left:98px;top:678px;font-size:13px">外</div>
<div class="a" style="left:47px;top:680px;width:9px;height:9px;background:#fff;border:1px solid #808080"></div>
<div class="a" style="left:49px;top:684px;width:5px;height:1px;background:#000"></div>
<!-- list scrollbars -->
<div class="hatch a" style="left:108px;top:229px;width:14px;height:465px"></div>
<div class="rb" style="left:108px;top:229px;width:14px;height:14px"></div>
<svg style="left:111px;top:234px" width="7" height="4"><path d="M0 4L3.5 0L7 4z" fill="#000"/></svg>
<div class="rb" style="left:108px;top:547px;width:14px;height:24px"></div>
<div class="rb" style="left:108px;top:680px;width:14px;height:14px"></div>
<svg style="left:111px;top:685px" width="7" height="4"><path d="M0 0h7L3.5 4z" fill="#000"/></svg>
<div class="hatch a" style="left:5px;top:694px;width:103px;height:14px"></div>
<div class="rb" style="left:5px;top:694px;width:14px;height:14px"></div>
<svg style="left:10px;top:697px" width="4" height="7"><path d="M4 0L0 3.5L4 7z" fill="#000"/></svg>
<div class="rb" style="left:19px;top:694px;width:8px;height:14px"></div>
<div class="rb" style="left:94px;top:694px;width:14px;height:14px"></div>
<svg style="left:99px;top:697px" width="4" height="7"><path d="M0 0L4 3.5L0 7z" fill="#000"/></svg>
<div class="a" style="left:108px;top:694px;width:14px;height:14px;background:#d4d0c8"></div>
<!-- MAIN PANEL -->
<div class="a" style="left:135px;top:180px;width:887px;height:534px;border:1px solid #000;border-right:0"></div>
<div class="a" style="left:136px;top:181px;width:885px;height:1px;background:#fff"></div>
<div class="a" style="left:136px;top:181px;width:1px;height:532px;background:#fff"></div>
<!-- tabs -->
<div class="a" style="left:138px;top:183px;width:92px;height:18px;background:#d4d0c8;border-right:1px solid #000"></div>
<div class="t" style="left:144px;top:183px;font-size:13px">版面:<span style="font-family:'Liberation Mono',monospace;font-size:10px;letter-spacing:0px"> Scene_1</span></div>
<div class="a" style="left:231px;top:184px;width:45px;height:17px;border-top:1px solid #fff;border-right:1px solid #000"></div>
<div class="t" style="left:234px;top:184px;font-size:13px">脚本</div>
<!-- tools -->
<div class="a" style="left:140px;top:202px;width:45px;height:15px;background:#808080"></div>
<div class="t" style="left:150px;top:202px;font-size:13px;color:#fff">工具</div>
<div class="a" style="left:140px;top:612px;width:45px;height:15px;background:#808080"></div>
<div class="t" style="left:150px;top:612px;font-size:13px;color:#fff">查看</div>
<div class="t" style="left:144px;top:631px;font-size:11px">150%</div>
<svg style="left:173px;top:634px" width="7" height="4"><path d="M0 0h7L3.5 4z" fill="#000"/></svg>
<svg style="left:0;top:0" width="1024" height="768">
<path d="M147 223v13l3-3 3 5 2-1-3-5h4z" fill="#000"/>
<path d="M171 225v12l3-3 3 5 2-1-3-5h4z" fill="#fff" stroke="#000" stroke-width="0.9"/><path d="M166 230l4-5h9" fill="none" stroke="#000"/><circle cx="170" cy="225" r="1.5" fill="#fff" stroke="#000"/>
<circle cx="150" cy="251" r="6" fill="none" stroke="#a8a8a8" stroke-width="2.5"/><rect x="150" y="248" width="6" height="8" fill="#c0c0c0" stroke="#909090"/>
<rect x="170" y="245" width="3" height="3" fill="#000"/><rect x="170" y="255" width="3" height="3" fill="#000"/><path d="M166 251h1M176 251h1M168 247h1M168 255h1" stroke="#000"/><path d="M178 254l4-4v4z" fill="none" stroke="#000"/>
<path d="M145 277l11-11" stroke="#000" stroke-width="1"/>
<path d="M168 278l2-5 7-9 3 2-7 9z" fill="#909090" stroke="#000"/>
<path d="M150 287l-4 6 2 3h4l2-3z" fill="#fff" stroke="#000"/><rect x="147" y="296" width="6" height="3" fill="#000"/>
<rect x="166.5" y="285.5" width="15" height="15" fill="none" stroke="#000" stroke-dasharray="1 1"/><text x="168" y="299" font-size="14" font-weight="bold" font-family="Liberation Serif">T</text>
<circle cx="151" cy="314" r="7" fill="#fff" stroke="#000" stroke-width="1.2"/>
<rect x="167.5" y="307.5" width="12" height="12" fill="#fff" stroke="#000"/>
<rect x="144.5" y="328.5" width="13" height="11" rx="3" fill="#fff" stroke="#000"/><path d="M155 338l3 3" stroke="#000"/>
<path d="M145 352c0-3 2-3 3-1v-4c0-2 2-2 2 0v-1c0-2 2-2 2 0v1c0-2 2-2 2 0v2c0-2 2-2 2 0v6c0 3-2 5-5 5h-1c-2 0-3-2-5-4z" fill="#fff" stroke="#000"/>
<circle cx="171" cy="352" r="4.5" fill="#fff" stroke="#000" stroke-width="1.3"/><path d="M174 355l5 5" stroke="#000" stroke-width="2"/>
<rect x="143.5" y="649.5" width="15" height="15" fill="#fff" stroke="#808080" stroke-width="2"/><circle cx="150" cy="656" r="4" fill="#80d0e0" stroke="#000"/><path d="M153 659l4 4" stroke="#000" stroke-width="2"/>
<text x="166" y="655" font-size="7" font-weight="bold" fill="#a00000" font-family="Liberation Sans">100%</text><circle cx="173" cy="659" r="4" fill="#80d0e0" stroke="#000"/><path d="M176 662l4 4" stroke="#000" stroke-width="2"/>
<circle cx="149" cy="676" r="4.5" fill="#fff" stroke="#000"/><path d="M147 676h5M149.5 673.5v5" stroke="#008000" stroke-width="2"/><path d="M152 680l5 5" stroke="#000" stroke-width="2"/>
<circle cx="171" cy="676" r="4.5" fill="#fff" stroke="#000"/><path d="M168.5 676h5" stroke="#a00000" stroke-width="2"/><path d="M174 680l5 5" stroke="#000" stroke-width="2"/>
<path d="M144 692h14M144 698h14M144 704h14M145 691v14M151 691v14M157 691v14" stroke="#a0a0a0" stroke-dasharray="1 1"/>
<path d="M166 692h14M166 698h14M166 704h14M167 691v14M173 691v14M179 691v14" stroke="#a0a0a0" stroke-dasharray="1 1"/><path d="M174 697v8l2-2 2 3 1-1-2-3h3z" fill="#fff" stroke="#000" stroke-width="0.8"/>
</svg>
<!-- rulers -->
<div class="a" style="left:188px;top:201px;width:833px;height:1px;background:#fff"></div>
<div class="a" style="left:188px;top:201px;width:1px;height:512px;background:#fff"></div>
<div class="a" style="left:206px;top:220px;width:812px;height:490px;background:#fff"></div>
<div class="a" style="left:1018px;top:219px;width:3px;height:494px;background:#d4d0c8;border-left:1px solid #fff"></div>
<div class="a" style="left:206px;top:710px;width:812px;height:3px;background:#d4d0c8;border-top:1px solid #fff"></div>
<div class="a" style="left:1021px;top:200px;width:1px;height:514px;background:#000"></div>
<svg style="left:0;top:0" width="1024" height="768"><path d="M212.5 217v2M219.5 214v5M226.5 217v2M234.5 214v5M242.5 217v2M249.5 214v5M256.5 217v2M264.5 214v5M272.5 217v2M279.5 214v5M286.5 217v2M294.5 214v5M302.5 217v2M309.5 214v5M316.5 217v2M324.5 214v5M332.5 217v2M339.5 214v5M346.5 217v2M354.5 214v5M362.5 217v2M369.5 214v5M376.5 217v2M384.5 214v5M392.5 217v2M399.5 214v5M406.5 217v2M414.5 214v5M422.5 217v2M429.5 214v5M436.5 217v2M444.5 214v5M452.5 217v2M459.5 214v5M466.5 217v2M474.5 214v5M482.5 217v2M489.5 214v5M496.5 217v2M504.5 214v5M512.5 217v2M519.5 214v5M526.5 217v2M534.5 214v5M542.5 217v2M549.5 214v5M556.5 217v2M564.5 214v5M572.5 217v2M579.5 214v5M586.5 217v2M594.5 214v5M602.5 217v2M609.5 214v5M616.5 217v2M624.5 214v5M632.5 217v2M639.5 214v5M646.5 217v2M654.5 214v5M662.5 217v2M669.5 214v5M676.5 217v2M684.5 214v5M692.5 217v2M699.5 214v5M706.5 217v2M714.5 214v5M722.5 217v2M729.5 214v5M736.5 217v2M744.5 214v5M752.5 217v2M759.5 214v5M766.5 217v2M774.5 214v5M782.5 217v2M789.5 214v5M796.5 217v2M804.5 214v5M812.5 217v2M819.5 214v5M826.5 217v2M834.5 214v5M842.5 217v2M849.5 214v5M856.5 217v2M864.5 214v5M872.5 217v2M879.5 214v5M886.5 217v2M894.5 214v5M902.5 217v2M909.5 214v5M916.5 217v2M924.5 214v5M932.5 217v2M939.5 214v5M946.5 217v2M954.5 214v5M962.5 217v2M969.5 214v5M976.5 217v2M984.5 214v5M992.5 217v2M999.5 214v5M1006.5 217v2M1014.5 214v5M203 222.5h2M200 229.5h5M203 236.5h2M200 244.5h5M203 252.5h2M200 259.5h5M203 266.5h2M200 274.5h5M203 282.5h2M200 289.5h5M203 296.5h2M200 304.5h5M203 312.5h2M200 319.5h5M203 326.5h2M200 334.5h5M203 342.5h2M200 349.5h5M203 356.5h2M200 364.5h5M203 372.5h2M200 379.5h5M203 386.5h2M200 394.5h5M203 402.5h2M200 409.5h5M203 416.5h2M200 424.5h5M203 432.5h2M200 439.5h5M203 446.5h2M200 454.5h5M203 462.5h2M200 469.5h5M203 476.5h2M200 484.5h5M203 492.5h2M200 499.5h5M203 506.5h2M200 514.5h5M203 522.5h2M200 529.5h5M203 536.5h2M200 544.5h5M203 552.5h2M200 559.5h5M203 566.5h2M200 574.5h5M203 582.5h2M200 589.5h5M203 596.5h2M200 604.5h5M203 612.5h2M200 619.5h5M203 626.5h2M200 634.5h5M203 642.5h2M200 649.5h5M203 656.5h2M200 664.5h5M203 672.5h2M200 679.5h5M203 686.5h2M200 694.5h5M203 702.5h2M200 709.5h5" stroke="#000" stroke-width="1"/><rect x="205" y="219" width="813" height="1" fill="#000"/><rect x="205" y="219" width="1" height="491" fill="#000"/></svg><div class="t rl" style="left:214.0px;top:204px;width:40px;text-align:center">-50</div><div class="t rl" style="left:289.0px;top:204px;width:40px;text-align:center">0</div><div class="t rl" style="left:364.0px;top:204px;width:40px;text-align:center">50</div><div class="t rl" style="left:439.0px;top:204px;width:40px;text-align:center">100</div><div class="t rl" style="left:514.0px;top:204px;width:40px;text-align:center">150</div><div class="t rl" style="left:589.0px;top:204px;width:40px;text-align:center">200</div><div class="t rl" style="left:664.0px;top:204px;width:40px;text-align:center">250</div><div class="t rl" style="left:739.0px;top:204px;width:40px;text-align:center">300</div><div class="t rl" style="left:814.0px;top:204px;width:40px;text-align:center">350</div><div class="t rl" style="left:889.0px;top:204px;width:40px;text-align:center">400</div><div class="t rl" style="left:964.0px;top:204px;width:40px;text-align:center">450</div><div class="a" style="left:189px;top:221px;width:16px;height:489px;overflow:hidden"><div class="t rl" style="left:7px;top:13.0px;width:40px;text-align:center;transform:rotate(-90deg);transform-origin:0 0">-150</div><div class="t rl" style="left:7px;top:88.0px;width:40px;text-align:center;transform:rotate(-90deg);transform-origin:0 0">-100</div><div class="t rl" style="left:7px;top:163.0px;width:40px;text-align:center;transform:rotate(-90deg);transform-origin:0 0">-50</div><div class="t rl" style="left:7px;top:238.0px;width:40px;text-align:center;transform:rotate(-90deg);transform-origin:0 0">0</div><div class="t rl" style="left:7px;top:313.0px;width:40px;text-align:center;transform:rotate(-90deg);transform-origin:0 0">50</div><div class="t rl" style="left:7px;top:388.0px;width:40px;text-align:center;transform:rotate(-90deg);transform-origin:0 0">100</div><div class="t rl" style="left:7px;top:463.0px;width:40px;text-align:center;transform:rotate(-90deg);transform-origin:0 0">150</div></div><svg style="left:0;top:0" width="1024" height="768"><defs><clipPath id="cv"><rect x="206" y="220" width="812" height="490"/></clipPath></defs><g clip-path="url(#cv)">
<path d="M206 234.5h55v-15" stroke="#e8102a" stroke-width="2" fill="none"/>
<path d="M206 234.5h20" stroke="#fff" stroke-width="0"/>
<path d="M228.5 229.5h5" stroke="#fff" stroke-width="0"/><path d="M228 229.5v10M234 229.5v10M226 239.5l10-10" stroke="#e8102a" stroke-width="1.1" fill="none"/><text x="231" y="226.5" class="lb" fill="#e8102a" text-anchor="middle">M0</text>
<path d="M206 267.5h215" stroke="#000" stroke-width="1.2"/>
<path d="M288.5 262.5h5" stroke="#fff" stroke-width="0"/><path d="M288 262.5v10M294 262.5v10M286 272.5l10-10" stroke="#000" stroke-width="1.1" fill="none"/><text x="291" y="259.5" class="lb" fill="#000" text-anchor="middle">X0</text>
<path d="M321.5 262.5h5" stroke="#fff" stroke-width="0"/><path d="M321 262.5v10M327 262.5v10M319 272.5l10-10" stroke="#000" stroke-width="1.1" fill="none"/><text x="324" y="259.5" class="lb" fill="#000" text-anchor="middle">X2</text>
<path d="M354.5 262.5h5" stroke="#fff" stroke-width="0"/><path d="M354 262.5v10M360 262.5v10M352 272.5l10-10" stroke="#000" stroke-width="1.1" fill="none"/><text x="357" y="259.5" class="lb" fill="#000" text-anchor="middle">X4</text>
<rect x="388.5" y="265.5" width="5" height="4" fill="#fff"/><path d="M388 262.0v11M394 262.0v11" stroke="#e8102a" stroke-width="1.4" fill="none"/><text x="391" y="259.5" class="lb" fill="#e8102a" text-anchor="middle">Y0</text>
<circle cx="431" cy="267.5" r="10" fill="#fff" stroke="#000" stroke-width="1.2"/><text x="431" y="270.5" class="lb" fill="#000" text-anchor="middle">Y1</text>
<path d="M206 365h215M394 365v32.5h27" stroke="#e8102a" stroke-width="2" fill="none"/>
<circle cx="431" cy="365" r="10" fill="#fff" stroke="#000" stroke-width="1.2"/><text x="431" y="368" class="lb" fill="#000" text-anchor="middle">Y2</text>
<circle cx="431" cy="397.5" r="10" fill="#fff" stroke="#000" stroke-width="1.2"/><text x="431" y="400.5" class="lb" fill="#000" text-anchor="middle">T0</text>
<text x="431" y="416" class="lb" fill="#000" text-anchor="middle">K200</text>
<path d="M206 430.5h215M394 430.5v33h27" stroke="#e8102a" stroke-width="2" fill="none"/>
<path d="M288.5 425.5h5" stroke="#fff" stroke-width="0"/><path d="M288 425.5v10M294 425.5v10M286 435.5l10-10" stroke="#000" stroke-width="1.1" fill="none"/><text x="291" y="422.5" class="lb" fill="#000" text-anchor="middle">Y1</text>
<rect x="322.5" y="428.5" width="5" height="4" fill="#fff"/><path d="M322 425.0v11M328 425.0v11" stroke="#e8102a" stroke-width="1.4" fill="none"/><text x="325" y="422.5" class="lb" fill="#e8102a" text-anchor="middle">Y0</text>
<circle cx="431" cy="430.5" r="10" fill="#fff" stroke="#000" stroke-width="1.2"/><text x="431" y="433.5" class="lb" fill="#000" text-anchor="middle">Y3</text>
<circle cx="431" cy="463.5" r="10" fill="#fff" stroke="#000" stroke-width="1.2"/><text x="431" y="466.5" class="lb" fill="#000" text-anchor="middle">T1</text>
<rect x="309.5" y="439.5" width="69" height="36" fill="none" stroke="#000" stroke-width="1"/>
<path d="M206 560.5h202" stroke="#000" stroke-width="1.2"/><path d="M412 551.5h-3v19h3M434 551.5h3v19h-3" stroke="#000" stroke-width="1.2" fill="none"/><text x="423" y="564" class="lb" fill="#000" text-anchor="middle">END</text>
<path d="M463 403.5L476.5 418H506V448H476.5V441L463 423z" fill="#00ee00"/>
<path d="M481 380C470 388 463 400 463 418C463 432 468 440 467 448L465 455" stroke="#000" stroke-width="1.6" fill="none"/>
<path d="M538 530.5H921" stroke="#e8102a" stroke-width="1.3"/><path d="M545 531L537 537M561 531L545 547M585 531L569 547M609 531L593 547M633 531L617 547M657 531L641 547M681 531L665 547M705 531L689 547M729 531L713 547M753 531L737 547M777 531L761 547M801 531L785 547M825 531L809 547M849 531L833 547M873 531L857 547" stroke="#e8102a" stroke-width="1.3"/>
<path d="M735.5 531v40h47v-40M874.5 531v40h46v-40" stroke="#e8102a" stroke-width="1.3" stroke-dasharray="6 4" fill="none"/>
<rect x="490.5" y="627.5" width="39" height="17.5" fill="#0010f0"/><path d="M491.0 628v-6" stroke="#0010f0" stroke-width="1.2"/>
<path d="M491.0 622L511 600" stroke="#e8102a" stroke-width="1.3"/><circle cx="516" cy="596" r="5.5" fill="none" stroke="#e8102a" stroke-width="1.3"/>
<rect x="537.5" y="627.5" width="39" height="17.5" fill="#0010f0"/><path d="M538.0 628v-6" stroke="#0010f0" stroke-width="1.2"/>
<path d="M538.0 622L558 600" stroke="#e8102a" stroke-width="1.3"/><circle cx="563" cy="596" r="5.5" fill="none" stroke="#e8102a" stroke-width="1.3"/>
<rect x="684" y="627.5" width="39" height="17.5" fill="#0010f0"/><path d="M684.5 628v-6" stroke="#0010f0" stroke-width="1.2"/>
<path d="M684.5 622L704 600" stroke="#e8102a" stroke-width="1.3"/><circle cx="709" cy="596" r="5.5" fill="none" stroke="#e8102a" stroke-width="1.3"/>
<rect x="834" y="627.5" width="39" height="17.5" fill="#0010f0"/><path d="M834.5 628v-6" stroke="#0010f0" stroke-width="1.2"/>
<path d="M834.5 622L851 600" stroke="#e8102a" stroke-width="1.3"/><circle cx="856" cy="596" r="5.5" fill="none" stroke="#e8102a" stroke-width="1.3"/>
</g></svg><svg style="left:0;top:0" width="1024" height="768"><g clip-path="url(#cv)"><text transform="translate(498.0,230.5) scale(0.74,1)" class="gs">N</text><text transform="translate(507.5,230.5) scale(0.74,1)" class="gs">=</text><text transform="translate(507.5,230.5) scale(0.74,1)" class="gs">N</text><text transform="translate(517.0,230.5) scale(0.74,1)" class="gs">=</text><text transform="translate(498.0,248.5) scale(0.74,1)" class="gs">”</text><text transform="translate(507.5,248.5) scale(0.74,1)" class="gs">L</text><text transform="translate(507.5,248.5) scale(0.74,1)" class="gs">”</text><text transform="translate(517.0,248.5) scale(0.74,1)" class="gs">L</text><text transform="translate(498.0,266.5) scale(0.74,1)" class="gs">E</text><text transform="translate(507.5,266.5) scale(0.74,1)" class="gs">F</text><text transform="translate(507.5,266.5) scale(0.74,1)" class="gs">E</text><text transform="translate(517.0,266.5) scale(0.74,1)" class="gs">F</text><text transform="translate(498.0,284.5) scale(0.74,1)" class="gs">T</text><text transform="translate(507.5,284.5) scale(0.74,1)" class="gs">”</text><text transform="translate(507.5,284.5) scale(0.74,1)" class="gs">T</text><text transform="translate(517.0,284.5) scale(0.74,1)" class="gs">”</text><text transform="translate(498.0,302.5) scale(0.74,1)" class="gs">&gt;</text><text transform="translate(507.5,302.5) scale(0.74,1)" class="gs">&lt;</text><text transform="translate(507.5,302.5) scale(0.74,1)" class="gs">&gt;</text><text transform="translate(517.0,302.5) scale(0.74,1)" class="gs">&lt;</text><text transform="translate(498.0,320.5) scale(0.74,1)" class="gs">F</text><text transform="translate(507.5,320.5) scale(0.74,1)" class="gs">O</text><text transform="translate(507.5,320.5) scale(0.74,1)" class="gs">F</text><text transform="translate(517.0,320.5) scale(0.74,1)" class="gs">O</text><text transform="translate(498.0,338.5) scale(0.74,1)" class="gs">N</text><text transform="translate(507.5,338.5) scale(0.74,1)" class="gs">T</text><text transform="translate(507.5,338.5) scale(0.74,1)" class="gs">N</text><text transform="translate(517.0,338.5) scale(0.74,1)" class="gs">T</text><text transform="translate(498.0,356.5) scale(0.74,1)" class="gs">F</text><text transform="translate(507.5,356.5) scale(0.74,1)" class="gs">A</text><text transform="translate(507.5,356.5) scale(0.74,1)" class="gs">F</text><text transform="translate(517.0,356.5) scale(0.74,1)" class="gs">A</text><text transform="translate(498.0,374.5) scale(0.74,1)" class="gs">C</text><text transform="translate(507.5,374.5) scale(0.74,1)" class="gs">E</text><text transform="translate(507.5,374.5) scale(0.74,1)" class="gs">C</text><text transform="translate(517.0,374.5) scale(0.74,1)" class="gs">E</text><text transform="translate(498.0,392.5) scale(0.74,1)" class="gs">=</text><text transform="translate(507.5,392.5) scale(0.74,1)" class="gs">”</text><text transform="translate(507.5,392.5) scale(0.74,1)" class="gs">=</text><text transform="translate(517.0,392.5) scale(0.74,1)" class="gs">”</text><text transform="translate(498.0,411.5) scale(1,1)" class="gc">鎓</text><text transform="translate(507.5,411.5) scale(1,1)" class="gc">鎓</text><text transform="translate(498.0,429.5) scale(1,1)" class="gc">座</text><text transform="translate(507.5,429.5) scale(1,1)" class="gc">座</text><text transform="translate(498.0,447.5) scale(1,1)" class="gc">构</text><text transform="translate(507.5,447.5) scale(1,1)" class="gc">构</text><text transform="translate(498.0,465.5) scale(1,1)" class="gc">缁</text><text transform="translate(507.5,465.5) scale(1,1)" class="gc">缁</text><text transform="translate(498.0,483.5) scale(1,1)" class="gc">嗛</text><text transform="translate(507.5,483.5) scale(1,1)" class="gc">嗛</text><text transform="translate(498.0,501.5) scale(1,1)" class="gc">粦</text><text transform="translate(507.5,501.5) scale(1,1)" class="gc">粦</text><text transform="translate(498.0,518.5) scale(0.74,1)" class="gs">”</text><text transform="translate(507.5,518.5) scale(0.74,1)" class="gs">”</text><text transform="translate(507.5,518.5) scale(0.74,1)" class="gs">”</text><text transform="translate(517.0,518.5) scale(0.74,1)" class="gs">”</text><text transform="translate(498.0,536.5) scale(0.74,1)" class="gs">S</text><text transform="translate(507.5,536.5) scale(0.74,1)" class="gs">I</text><text transform="translate(507.5,536.5) scale(0.74,1)" class="gs">S</text><text transform="translate(517.0,536.5) scale(0.74,1)" class="gs">I</text><text transform="translate(498.0,554.5) scale(0.74,1)" class="gs">Z</text><text transform="translate(507.5,554.5) scale(0.74,1)" class="gs">E</text><text transform="translate(507.5,554.5) scale(0.74,1)" class="gs">Z</text><text transform="translate(517.0,554.5) scale(0.74,1)" class="gs">E</text><text transform="translate(498.0,572.5) scale(0.74,1)" class="gs">=</text><text transform="translate(507.5,572.5) scale(0.74,1)" class="gs">”</text><text transform="translate(507.5,572.5) scale(0.74,1)" class="gs">=</text><text transform="translate(517.0,572.5) scale(0.74,1)" class="gs">”</text><text transform="translate(498.0,590.5) scale(0.74,1)" class="gs">1</text><text transform="translate(507.5,590.5) scale(0.74,1)" class="gs">2</text><text transform="translate(507.5,590.5) scale(0.74,1)" class="gs">1</text><text transform="translate(517.0,590.5) scale(0.74,1)" class="gs">2</text><text transform="translate(498.0,608.5) scale(0.74,1)" class="gs">”</text><text transform="translate(507.5,608.5) scale(0.74,1)" class="gs">”</text><text transform="translate(507.5,608.5) scale(0.74,1)" class="gs">”</text><text transform="translate(517.0,608.5) scale(0.74,1)" class="gs">”</text><text transform="translate(498.0,626.5) scale(0.74,1)" class="gs">C</text><text transform="translate(507.5,626.5) scale(0.74,1)" class="gs">O</text><text transform="translate(507.5,626.5) scale(0.74,1)" class="gs">C</text><text transform="translate(517.0,626.5) scale(0.74,1)" class="gs">O</text><text transform="translate(498.0,644.5) scale(0.74,1)" class="gs">L</text><text transform="translate(507.5,644.5) scale(0.74,1)" class="gs">O</text><text transform="translate(507.5,644.5) scale(0.74,1)" class="gs">L</text><text transform="translate(517.0,644.5) scale(0.74,1)" class="gs">O</text><text transform="translate(498.0,662.5) scale(0.74,1)" class="gs">R</text><text transform="translate(507.5,662.5) scale(0.74,1)" class="gs">=</text><text transform="translate(507.5,662.5) scale(0.74,1)" class="gs">R</text><text transform="translate(517.0,662.5) scale(0.74,1)" class="gs">=</text><text transform="translate(498.0,680.5) scale(0.74,1)" class="gs">”</text><text transform="translate(507.5,680.5) scale(0.74,1)" class="gs">#</text><text transform="translate(507.5,680.5) scale(0.74,1)" class="gs">”</text><text transform="translate(517.0,680.5) scale(0.74,1)" class="gs">#</text><text transform="translate(498.0,698.5) scale(0.74,1)" class="gs">0</text><text transform="translate(507.5,698.5) scale(0.74,1)" class="gs">0</text><text transform="translate(507.5,698.5) scale(0.74,1)" class="gs">0</text><text transform="translate(517.0,698.5) scale(0.74,1)" class="gs">0</text><text transform="translate(498.0,716.5) scale(0.74,1)" class="gs">0</text><text transform="translate(507.5,716.5) scale(0.74,1)" class="gs">0</text><text transform="translate(507.5,716.5) scale(0.74,1)" class="gs">0</text><text transform="translate(517.0,716.5) scale(0.74,1)" class="gs">0</text><text transform="translate(545.0,230.5) scale(0.74,1)" class="gs">N</text><text transform="translate(554.5,230.5) scale(0.74,1)" class="gs">=</text><text transform="translate(554.5,230.5) scale(0.74,1)" class="gs">N</text><text transform="translate(564.0,230.5) scale(0.74,1)" class="gs">=</text><text transform="translate(545.0,248.5) scale(0.74,1)" class="gs">”</text><text transform="translate(554.5,248.5) scale(0.74,1)" class="gs">L</text><text transform="translate(554.5,248.5) scale(0.74,1)" class="gs">”</text><text transform="translate(564.0,248.5) scale(0.74,1)" class="gs">L</text><text transform="translate(545.0,266.5) scale(0.74,1)" class="gs">E</text><text transform="translate(554.5,266.5) scale(0.74,1)" class="gs">F</text><text transform="translate(554.5,266.5) scale(0.74,1)" class="gs">E</text><text transform="translate(564.0,266.5) scale(0.74,1)" class="gs">F</text><text transform="translate(545.0,284.5) scale(0.74,1)" class="gs">T</text><text transform="translate(554.5,284.5) scale(0.74,1)" class="gs">”</text><text transform="translate(554.5,284.5) scale(0.74,1)" class="gs">T</text><text transform="translate(564.0,284.5) scale(0.74,1)" class="gs">”</text><text transform="translate(545.0,302.5) scale(0.74,1)" class="gs">&gt;</text><text transform="translate(554.5,302.5) scale(0.74,1)" class="gs">&lt;</text><text transform="translate(554.5,302.5) scale(0.74,1)" class="gs">&gt;</text><text transform="translate(564.0,302.5) scale(0.74,1)" class="gs">&lt;</text><text transform="translate(545.0,320.5) scale(0.74,1)" class="gs">F</text><text transform="translate(554.5,320.5) scale(0.74,1)" class="gs">O</text><text transform="translate(554.5,320.5) scale(0.74,1)" class="gs">F</text><text transform="translate(564.0,320.5) scale(0.74,1)" class="gs">O</text><text transform="translate(545.0,338.5) scale(0.74,1)" class="gs">N</text><text transform="translate(554.5,338.5) scale(0.74,1)" class="gs">T</text><text transform="translate(554.5,338.5) scale(0.74,1)" class="gs">N</text><text transform="translate(564.0,338.5) scale(0.74,1)" class="gs">T</text><text transform="translate(545.0,356.5) scale(0.74,1)" class="gs">F</text><text transform="translate(554.5,356.5) scale(0.74,1)" class="gs">A</text><text transform="translate(554.5,356.5) scale(0.74,1)" class="gs">F</text><text transform="translate(564.0,356.5) scale(0.74,1)" class="gs">A</text><text transform="translate(545.0,374.5) scale(0.74,1)" class="gs">C</text><text transform="translate(554.5,374.5) scale(0.74,1)" class="gs">E</text><text transform="translate(554.5,374.5) scale(0.74,1)" class="gs">C</text><text transform="translate(564.0,374.5) scale(0.74,1)" class="gs">E</text><text transform="translate(545.0,392.5) scale(0.74,1)" class="gs">=</text><text transform="translate(554.5,392.5) scale(0.74,1)" class="gs">”</text><text transform="translate(554.5,392.5) scale(0.74,1)" class="gs">=</text><text transform="translate(564.0,392.5) scale(0.74,1)" class="gs">”</text><text transform="translate(545.0,411.5) scale(1,1)" class="gc">鎓</text><text transform="translate(554.5,411.5) scale(1,1)" class="gc">鎓</text><text transform="translate(545.0,429.5) scale(1,1)" class="gc">座</text><text transform="translate(554.5,429.5) scale(1,1)" class="gc">座</text><text transform="translate(545.0,447.5) scale(1,1)" class="gc">构</text><text transform="translate(554.5,447.5) scale(1,1)" class="gc">构</text><text transform="translate(545.0,465.5) scale(1,1)" class="gc">缁</text><text transform="translate(554.5,465.5) scale(1,1)" class="gc">缁</text><text transform="translate(545.0,483.5) scale(1,1)" class="gc">嗛</text><text transform="translate(554.5,483.5) scale(1,1)" class="gc">嗛</text><text transform="translate(545.0,501.5) scale(1,1)" class="gc">粦</text><text transform="translate(554.5,501.5) scale(1,1)" class="gc">粦</text><text transform="translate(545.0,518.5) scale(0.74,1)" class="gs">”</text><text transform="translate(554.5,518.5) scale(0.74,1)" class="gs">”</text><text transform="translate(554.5,518.5) scale(0.74,1)" class="gs">”</text><text transform="translate(564.0,518.5) scale(0.74,1)" class="gs">”</text><text transform="translate(545.0,536.5) scale(0.74,1)" class="gs">S</text><text transform="translate(554.5,536.5) scale(0.74,1)" class="gs">I</text><text transform="translate(554.5,536.5) scale(0.74,1)" class="gs">S</text><text transform="translate(564.0,536.5) scale(0.74,1)" class="gs">I</text><text transform="translate(545.0,554.5) scale(0.74,1)" class="gs">Z</text><text transform="translate(554.5,554.5) scale(0.74,1)" class="gs">E</text><text transform="translate(554.5,554.5) scale(0.74,1)" class="gs">Z</text><text transform="translate(564.0,554.5) scale(0.74,1)" class="gs">E</text><text transform="translate(545.0,572.5) scale(0.74,1)" class="gs">=</text><text transform="translate(554.5,572.5) scale(0.74,1)" class="gs">”</text><text transform="translate(554.5,572.5) scale(0.74,1)" class="gs">=</text><text transform="translate(564.0,572.5) scale(0.74,1)" class="gs">”</text><text transform="translate(545.0,590.5) scale(0.74,1)" class="gs">1</text><text transform="translate(554.5,590.5) scale(0.74,1)" class="gs">2</text><text transform="translate(554.5,590.5) scale(0.74,1)" class="gs">1</text><text transform="translate(564.0,590.5) scale(0.74,1)" class="gs">2</text><text transform="translate(545.0,608.5) scale(0.74,1)" class="gs">”</text><text transform="translate(554.5,608.5) scale(0.74,1)" class="gs">”</text><text transform="translate(554.5,608.5) scale(0.74,1)" class="gs">”</text><text transform="translate(564.0,608.5) scale(0.74,1)" class="gs">”</text><text transform="translate(545.0,626.5) scale(0.74,1)" class="gs">C</text><text transform="translate(554.5,626.5) scale(0.74,1)" class="gs">O</text><text transform="translate(554.5,626.5) scale(0.74,1)" class="gs">C</text><text transform="translate(564.0,626.5) scale(0.74,1)" class="gs">O</text><text transform="translate(545.0,644.5) scale(0.74,1)" class="gs">L</text><text transform="translate(554.5,644.5) scale(0.74,1)" class="gs">O</text><text transform="translate(554.5,644.5) scale(0.74,1)" class="gs">L</text><text transform="translate(564.0,644.5) scale(0.74,1)" class="gs">O</text><text transform="translate(545.0,662.5) scale(0.74,1)" class="gs">R</text><text transform="translate(554.5,662.5) scale(0.74,1)" class="gs">=</text><text transform="translate(554.5,662.5) scale(0.74,1)" class="gs">R</text><text transform="translate(564.0,662.5) scale(0.74,1)" class="gs">=</text><text transform="translate(545.0,680.5) scale(0.74,1)" class="gs">”</text><text transform="translate(554.5,680.5) scale(0.74,1)" class="gs">#</text><text transform="translate(554.5,680.5) scale(0.74,1)" class="gs">”</text><text transform="translate(564.0,680.5) scale(0.74,1)" class="gs">#</text><text transform="translate(545.0,698.5) scale(0.74,1)" class="gs">0</text><text transform="translate(554.5,698.5) scale(0.74,1)" class="gs">0</text><text transform="translate(554.5,698.5) scale(0.74,1)" class="gs">0</text><text transform="translate(564.0,698.5) scale(0.74,1)" class="gs">0</text><text transform="translate(545.0,716.5) scale(0.74,1)" class="gs">0</text><text transform="translate(554.5,716.5) scale(0.74,1)" class="gs">0</text><text transform="translate(554.5,716.5) scale(0.74,1)" class="gs">0</text><text transform="translate(564.0,716.5) scale(0.74,1)" class="gs">0</text><text transform="translate(691.0,230.5) scale(0.74,1)" class="gs">N</text><text transform="translate(700.5,230.5) scale(0.74,1)" class="gs">=</text><text transform="translate(700.5,230.5) scale(0.74,1)" class="gs">N</text><text transform="translate(710.0,230.5) scale(0.74,1)" class="gs">=</text><text transform="translate(691.0,248.5) scale(0.74,1)" class="gs">”</text><text transform="translate(700.5,248.5) scale(0.74,1)" class="gs">L</text><text transform="translate(700.5,248.5) scale(0.74,1)" class="gs">”</text><text transform="translate(710.0,248.5) scale(0.74,1)" class="gs">L</text><text transform="translate(691.0,266.5) scale(0.74,1)" class="gs">E</text><text transform="translate(700.5,266.5) scale(0.74,1)" class="gs">F</text><text transform="translate(700.5,266.5) scale(0.74,1)" class="gs">E</text><text transform="translate(710.0,266.5) scale(0.74,1)" class="gs">F</text><text transform="translate(691.0,284.5) scale(0.74,1)" class="gs">T</text><text transform="translate(700.5,284.5) scale(0.74,1)" class="gs">”</text><text transform="translate(700.5,284.5) scale(0.74,1)" class="gs">T</text><text transform="translate(710.0,284.5) scale(0.74,1)" class="gs">”</text><text transform="translate(691.0,302.5) scale(0.74,1)" class="gs">&gt;</text><text transform="translate(700.5,302.5) scale(0.74,1)" class="gs">&lt;</text><text transform="translate(700.5,302.5) scale(0.74,1)" class="gs">&gt;</text><text transform="translate(710.0,302.5) scale(0.74,1)" class="gs">&lt;</text><text transform="translate(691.0,320.5) scale(0.74,1)" class="gs">F</text><text transform="translate(700.5,320.5) scale(0.74,1)" class="gs">O</text><text transform="translate(700.5,320.5) scale(0.74,1)" class="gs">F</text><text transform="translate(710.0,320.5) scale(0.74,1)" class="gs">O</text><text transform="translate(691.0,338.5) scale(0.74,1)" class="gs">N</text><text transform="translate(700.5,338.5) scale(0.74,1)" class="gs">T</text><text transform="translate(700.5,338.5) scale(0.74,1)" class="gs">N</text><text transform="translate(710.0,338.5) scale(0.74,1)" class="gs">T</text><text transform="translate(691.0,356.5) scale(0.74,1)" class="gs">F</text><text transform="translate(700.5,356.5) scale(0.74,1)" class="gs">A</text><text transform="translate(700.5,356.5) scale(0.74,1)" class="gs">F</text><text transform="translate(710.0,356.5) scale(0.74,1)" class="gs">A</text><text transform="translate(691.0,374.5) scale(0.74,1)" class="gs">C</text><text transform="translate(700.5,374.5) scale(0.74,1)" class="gs">E</text><text transform="translate(700.5,374.5) scale(0.74,1)" class="gs">C</text><text transform="translate(710.0,374.5) scale(0.74,1)" class="gs">E</text><text transform="translate(691.0,392.5) scale(0.74,1)" class="gs">=</text><text transform="translate(700.5,392.5) scale(0.74,1)" class="gs">”</text><text transform="translate(700.5,392.5) scale(0.74,1)" class="gs">=</text><text transform="translate(710.0,392.5) scale(0.74,1)" class="gs">”</text><text transform="translate(691.0,411.5) scale(1,1)" class="gc">鎓</text><text transform="translate(700.5,411.5) scale(1,1)" class="gc">鎓</text><text transform="translate(691.0,429.5) scale(1,1)" class="gc">座</text><text transform="translate(700.5,429.5) scale(1,1)" class="gc">座</text><text transform="translate(691.0,447.5) scale(1,1)" class="gc">构</text><text transform="translate(700.5,447.5) scale(1,1)" class="gc">构</text><text transform="translate(691.0,465.5) scale(1,1)" class="gc">缁</text><text transform="translate(700.5,465.5) scale(1,1)" class="gc">缁</text><text transform="translate(691.0,483.5) scale(1,1)" class="gc">嗛</text><text transform="translate(700.5,483.5) scale(1,1)" class="gc">嗛</text><text transform="translate(691.0,501.5) scale(1,1)" class="gc">粦</text><text transform="translate(700.5,501.5) scale(1,1)" class="gc">粦</text><text transform="translate(691.0,518.5) scale(0.74,1)" class="gs">”</text><text transform="translate(700.5,518.5) scale(0.74,1)" class="gs">”</text><text transform="translate(700.5,518.5) scale(0.74,1)" class="gs">”</text><text transform="translate(710.0,518.5) scale(0.74,1)" class="gs">”</text><text transform="translate(691.0,536.5) scale(0.74,1)" class="gs">S</text><text transform="translate(700.5,536.5) scale(0.74,1)" class="gs">I</text><text transform="translate(700.5,536.5) scale(0.74,1)" class="gs">S</text><text transform="translate(710.0,536.5) scale(0.74,1)" class="gs">I</text><text transform="translate(691.0,554.5) scale(0.74,1)" class="gs">Z</text><text transform="translate(700.5,554.5) scale(0.74,1)" class="gs">E</text><text transform="translate(700.5,554.5) scale(0.74,1)" class="gs">Z</text><text transform="translate(710.0,554.5) scale(0.74,1)" class="gs">E</text><text transform="translate(691.0,572.5) scale(0.74,1)" class="gs">=</text><text transform="translate(700.5,572.5) scale(0.74,1)" class="gs">”</text><text transform="translate(700.5,572.5) scale(0.74,1)" class="gs">=</text><text transform="translate(710.0,572.5) scale(0.74,1)" class="gs">”</text><text transform="translate(691.0,590.5) scale(0.74,1)" class="gs">1</text><text transform="translate(700.5,590.5) scale(0.74,1)" class="gs">2</text><text transform="translate(700.5,590.5) scale(0.74,1)" class="gs">1</text><text transform="translate(710.0,590.5) scale(0.74,1)" class="gs">2</text><text transform="translate(691.0,608.5) scale(0.74,1)" class="gs">”</text><text transform="translate(700.5,608.5) scale(0.74,1)" class="gs">”</text><text transform="translate(700.5,608.5) scale(0.74,1)" class="gs">”</text><text transform="translate(710.0,608.5) scale(0.74,1)" class="gs">”</text><text transform="translate(691.0,626.5) scale(0.74,1)" class="gs">C</text><text transform="translate(700.5,626.5) scale(0.74,1)" class="gs">O</text><text transform="translate(700.5,626.5) scale(0.74,1)" class="gs">C</text><text transform="translate(710.0,626.5) scale(0.74,1)" class="gs">O</text><text transform="translate(691.0,644.5) scale(0.74,1)" class="gs">L</text><text transform="translate(700.5,644.5) scale(0.74,1)" class="gs">O</text><text transform="translate(700.5,644.5) scale(0.74,1)" class="gs">L</text><text transform="translate(710.0,644.5) scale(0.74,1)" class="gs">O</text><text transform="translate(691.0,662.5) scale(0.74,1)" class="gs">R</text><text transform="translate(700.5,662.5) scale(0.74,1)" class="gs">=</text><text transform="translate(700.5,662.5) scale(0.74,1)" class="gs">R</text><text transform="translate(710.0,662.5) scale(0.74,1)" class="gs">=</text><text transform="translate(691.0,680.5) scale(0.74,1)" class="gs">”</text><text transform="translate(700.5,680.5) scale(0.74,1)" class="gs">#</text><text transform="translate(700.5,680.5) scale(0.74,1)" class="gs">”</text><text transform="translate(710.0,680.5) scale(0.74,1)" class="gs">#</text><text transform="translate(691.0,698.5) scale(0.74,1)" class="gs">0</text><text transform="translate(700.5,698.5) scale(0.74,1)" class="gs">0</text><text transform="translate(700.5,698.5) scale(0.74,1)" class="gs">0</text><text transform="translate(710.0,698.5) scale(0.74,1)" class="gs">0</text><text transform="translate(691.0,716.5) scale(0.74,1)" class="gs">0</text><text transform="translate(700.5,716.5) scale(0.74,1)" class="gs">0</text><text transform="translate(700.5,716.5) scale(0.74,1)" class="gs">0</text><text transform="translate(710.0,716.5) scale(0.74,1)" class="gs">0</text><text transform="translate(838.0,230.5) scale(0.74,1)" class="gs">N</text><text transform="translate(847.5,230.5) scale(0.74,1)" class="gs">=</text><text transform="translate(847.5,230.5) scale(0.74,1)" class="gs">N</text><text transform="translate(857.0,230.5) scale(0.74,1)" class="gs">=</text><text transform="translate(838.0,248.5) scale(0.74,1)" class="gs">”</text><text transform="translate(847.5,248.5) scale(0.74,1)" class="gs">L</text><text transform="translate(847.5,248.5) scale(0.74,1)" class="gs">”</text><text transform="translate(857.0,248.5) scale(0.74,1)" class="gs">L</text><text transform="translate(838.0,266.5) scale(0.74,1)" class="gs">E</text><text transform="translate(847.5,266.5) scale(0.74,1)" class="gs">F</text><text transform="translate(847.5,266.5) scale(0.74,1)" class="gs">E</text><text transform="translate(857.0,266.5) scale(0.74,1)" class="gs">F</text><text transform="translate(838.0,284.5) scale(0.74,1)" class="gs">T</text><text transform="translate(847.5,284.5) scale(0.74,1)" class="gs">”</text><text transform="translate(847.5,284.5) scale(0.74,1)" class="gs">T</text><text transform="translate(857.0,284.5) scale(0.74,1)" class="gs">”</text><text transform="translate(838.0,302.5) scale(0.74,1)" class="gs">&gt;</text><text transform="translate(847.5,302.5) scale(0.74,1)" class="gs">&lt;</text><text transform="translate(847.5,302.5) scale(0.74,1)" class="gs">&gt;</text><text transform="translate(857.0,302.5) scale(0.74,1)" class="gs">&lt;</text><text transform="translate(838.0,320.5) scale(0.74,1)" class="gs">F</text><text transform="translate(847.5,320.5) scale(0.74,1)" class="gs">O</text><text transform="translate(847.5,320.5) scale(0.74,1)" class="gs">F</text><text transform="translate(857.0,320.5) scale(0.74,1)" class="gs">O</text><text transform="translate(838.0,338.5) scale(0.74,1)" class="gs">N</text><text transform="translate(847.5,338.5) scale(0.74,1)" class="gs">T</text><text transform="translate(847.5,338.5) scale(0.74,1)" class="gs">N</text><text transform="translate(857.0,338.5) scale(0.74,1)" class="gs">T</text><text transform="translate(838.0,356.5) scale(0.74,1)" class="gs">F</text><text transform="translate(847.5,356.5) scale(0.74,1)" class="gs">A</text><text transform="translate(847.5,356.5) scale(0.74,1)" class="gs">F</text><text transform="translate(857.0,356.5) scale(0.74,1)" class="gs">A</text><text transform="translate(838.0,374.5) scale(0.74,1)" class="gs">C</text><text transform="translate(847.5,374.5) scale(0.74,1)" class="gs">E</text><text transform="translate(847.5,374.5) scale(0.74,1)" class="gs">C</text><text transform="translate(857.0,374.5) scale(0.74,1)" class="gs">E</text><text transform="translate(838.0,392.5) scale(0.74,1)" class="gs">=</text><text transform="translate(847.5,392.5) scale(0.74,1)" class="gs">”</text><text transform="translate(847.5,392.5) scale(0.74,1)" class="gs">=</text><text transform="translate(857.0,392.5) scale(0.74,1)" class="gs">”</text><text transform="translate(838.0,411.5) scale(1,1)" class="gc">鎓</text><text transform="translate(847.5,411.5) scale(1,1)" class="gc">鎓</text><text transform="translate(838.0,429.5) scale(1,1)" class="gc">座</text><text transform="translate(847.5,429.5) scale(1,1)" class="gc">座</text><text transform="translate(838.0,447.5) scale(1,1)" class="gc">构</text><text transform="translate(847.5,447.5) scale(1,1)" class="gc">构</text><text transform="translate(838.0,465.5) scale(1,1)" class="gc">缁</text><text transform="translate(847.5,465.5) scale(1,1)" class="gc">缁</text><text transform="translate(838.0,483.5) scale(1,1)" class="gc">嗛</text><text transform="translate(847.5,483.5) scale(1,1)" class="gc">嗛</text><text transform="translate(838.0,501.5) scale(1,1)" class="gc">粦</text><text transform="translate(847.5,501.5) scale(1,1)" class="gc">粦</text><text transform="translate(838.0,518.5) scale(0.74,1)" class="gs">”</text><text transform="translate(847.5,518.5) scale(0.74,1)" class="gs">”</text><text transform="translate(847.5,518.5) scale(0.74,1)" class="gs">”</text><text transform="translate(857.0,518.5) scale(0.74,1)" class="gs">”</text><text transform="translate(838.0,536.5) scale(0.74,1)" class="gs">S</text><text transform="translate(847.5,536.5) scale(0.74,1)" class="gs">I</text><text transform="translate(847.5,536.5) scale(0.74,1)" class="gs">S</text><text transform="translate(857.0,536.5) scale(0.74,1)" class="gs">I</text><text transform="translate(838.0,554.5) scale(0.74,1)" class="gs">Z</text><text transform="translate(847.5,554.5) scale(0.74,1)" class="gs">E</text><text transform="translate(847.5,554.5) scale(0.74,1)" class="gs">Z</text><text transform="translate(857.0,554.5) scale(0.74,1)" class="gs">E</text><text transform="translate(838.0,572.5) scale(0.74,1)" class="gs">=</text><text transform="translate(847.5,572.5) scale(0.74,1)" class="gs">”</text><text transform="translate(847.5,572.5) scale(0.74,1)" class="gs">=</text><text transform="translate(857.0,572.5) scale(0.74,1)" class="gs">”</text><text transform="translate(838.0,590.5) scale(0.74,1)" class="gs">1</text><text transform="translate(847.5,590.5) scale(0.74,1)" class="gs">2</text><text transform="translate(847.5,590.5) scale(0.74,1)" class="gs">1</text><text transform="translate(857.0,590.5) scale(0.74,1)" class="gs">2</text><text transform="translate(838.0,608.5) scale(0.74,1)" class="gs">”</text><text transform="translate(847.5,608.5) scale(0.74,1)" class="gs">”</text><text transform="translate(847.5,608.5) scale(0.74,1)" class="gs">”</text><text transform="translate(857.0,608.5) scale(0.74,1)" class="gs">”</text><text transform="translate(838.0,626.5) scale(0.74,1)" class="gs">C</text><text transform="translate(847.5,626.5) scale(0.74,1)" class="gs">O</text><text transform="translate(847.5,626.5) scale(0.74,1)" class="gs">C</text><text transform="translate(857.0,626.5) scale(0.74,1)" class="gs">O</text><text transform="translate(838.0,644.5) scale(0.74,1)" class="gs">L</text><text transform="translate(847.5,644.5) scale(0.74,1)" class="gs">O</text><text transform="translate(847.5,644.5) scale(0.74,1)" class="gs">L</text><text transform="translate(857.0,644.5) scale(0.74,1)" class="gs">O</text><text transform="translate(838.0,662.5) scale(0.74,1)" class="gs">R</text><text transform="translate(847.5,662.5) scale(0.74,1)" class="gs">=</text><text transform="translate(847.5,662.5) scale(0.74,1)" class="gs">R</text><text transform="translate(857.0,662.5) scale(0.74,1)" class="gs">=</text><text transform="translate(838.0,680.5) scale(0.74,1)" class="gs">”</text><text transform="translate(847.5,680.5) scale(0.74,1)" class="gs">#</text><text transform="translate(847.5,680.5) scale(0.74,1)" class="gs">”</text><text transform="translate(857.0,680.5) scale(0.74,1)" class="gs">#</text><text transform="translate(838.0,698.5) scale(0.74,1)" class="gs">0</text><text transform="translate(847.5,698.5) scale(0.74,1)" class="gs">0</text><text transform="translate(847.5,698.5) scale(0.74,1)" class="gs">0</text><text transform="translate(857.0,698.5) scale(0.74,1)" class="gs">0</text><text transform="translate(838.0,716.5) scale(0.74,1)" class="gs">0</text><text transform="translate(847.5,716.5) scale(0.74,1)" class="gs">0</text><text transform="translate(847.5,716.5) scale(0.74,1)" class="gs">0</text><text transform="translate(857.0,716.5) scale(0.74,1)" class="gs">0</text><text x="535.0" y="227" class="bt">X</text><text x="542.5" y="227" class="bt">0</text><rect x="552.0" y="215.5" width="11" height="11" fill="none" stroke="#3434c4" stroke-width="1"/><rect x="567.0" y="215.5" width="11" height="11" fill="none" stroke="#3434c4" stroke-width="1"/><text x="580.0" y="227" class="bt">]</text><text x="587.5" y="227" class="bt">2</text><text x="595.0" y="227" class="bt">0</text><text x="610.0" y="227" class="bt">_</text><text x="617.5" y="227" class="bt">Q</text><text x="535.0" y="241" class="bt">T</text><text x="542.5" y="241" class="bt">0</text><rect x="552.0" y="229.5" width="11" height="11" fill="none" stroke="#3434c4" stroke-width="1"/><rect x="567.0" y="229.5" width="11" height="11" fill="none" stroke="#3434c4" stroke-width="1"/><text x="580.0" y="241" class="bc">埮</text><text x="595.0" y="241" class="bc">埮</text><text x="610.0" y="241" class="bt">e</text><text x="617.5" y="241" class="bc">嫲</text><text x="632.5" y="241" class="bc">嫲</text><text x="647.5" y="241" class="bt">e</text><text x="655.0" y="241" class="bt">V</text><text x="535.0" y="256" class="bt">M</text><text x="542.5" y="256" class="bt">0</text><rect x="552.0" y="244.5" width="11" height="11" fill="none" stroke="#3434c4" stroke-width="1"/><rect x="567.0" y="244.5" width="11" height="11" fill="none" stroke="#3434c4" stroke-width="1"/><text x="580.0" y="256" class="bc">弸</text><text x="595.0" y="256" class="bc">弸</text><text x="610.0" y="256" class="bt">R</text><text x="617.5" y="256" class="bt">~</text><text x="625.0" y="256" class="bt">u</text><text x="632.5" y="256" class="bt">V</text><text x="535.0" y="271" class="bt">Y</text><text x="542.5" y="271" class="bt">1</text><rect x="552.0" y="259.5" width="11" height="11" fill="none" stroke="#3434c4" stroke-width="1"/><rect x="567.0" y="259.5" width="11" height="11" fill="none" stroke="#3434c4" stroke-width="1"/><text x="580.0" y="271" class="bt">]</text><text x="587.5" y="271" class="bc">扎</text><text x="602.5" y="271" class="bc">扎</text><text x="617.5" y="271" class="bc">彄</text><text x="632.5" y="271" class="bc">彄</text><text x="647.5" y="271" class="bt">Q</text><text x="535.0" y="286" class="bt">Y</text><text x="542.5" y="286" class="bt">3</text><rect x="552.0" y="274.5" width="11" height="11" fill="none" stroke="#3434c4" stroke-width="1"/><rect x="567.0" y="274.5" width="11" height="11" fill="none" stroke="#3434c4" stroke-width="1"/><text x="580.0" y="286" class="bt">S</text><text x="587.5" y="286" class="bt">e</text><text x="595.0" y="286" class="bc">彄</text><text x="610.0" y="286" class="bc">彄</text><text x="625.0" y="286" class="bt">Q</text><text x="693.0" y="227" class="bt">N</text><rect x="702.5" y="215.5" width="11" height="11" fill="none" stroke="#3434c4" stroke-width="1"/><rect x="717.5" y="215.5" width="11" height="11" fill="none" stroke="#3434c4" stroke-width="1"/><text x="730.5" y="227" class="bt">N</text><text x="738.0" y="227" class="bc">蠕</text><text x="753.0" y="227" class="bc">蠕</text><text x="768.0" y="227" class="bt">O</text><text x="783.0" y="227" class="bt">_</text><text x="790.5" y="227" class="bt">Q</text><text x="769.0" y="242" class="bt">T</text><text x="776.5" y="242" class="bt">1</text><rect x="786.0" y="230.5" width="11" height="11" fill="none" stroke="#3434c4" stroke-width="1"/><rect x="801.0" y="230.5" width="11" height="11" fill="none" stroke="#3434c4" stroke-width="1"/><text x="814.0" y="242" class="bt">S</text><text x="821.5" y="242" class="bt">e</text><text x="829.0" y="242" class="bc">嫲</text><text x="844.0" y="242" class="bc">嫲</text><text x="859.0" y="242" class="bt">e</text><text x="866.5" y="242" class="bt">V</text><text x="730.0" y="257" class="bt">Y</text><text x="737.5" y="257" class="bt">0</text><rect x="747.0" y="245.5" width="11" height="11" fill="none" stroke="#3434c4" stroke-width="1"/><rect x="762.0" y="245.5" width="11" height="11" fill="none" stroke="#3434c4" stroke-width="1"/><text x="775.0" y="257" class="bt">S</text><text x="782.5" y="257" class="bc">扎</text><text x="797.5" y="257" class="bc">扎</text><text x="812.5" y="257" class="bc">彄</text><text x="827.5" y="257" class="bc">彄</text><text x="842.5" y="257" class="bt">Q</text><text x="790.0" y="272" class="bt">Y</text><text x="797.5" y="272" class="bt">2</text><rect x="807.0" y="260.5" width="11" height="11" fill="none" stroke="#3434c4" stroke-width="1"/><rect x="822.0" y="260.5" width="11" height="11" fill="none" stroke="#3434c4" stroke-width="1"/><text x="835.0" y="272" class="bc">埮</text><text x="850.0" y="272" class="bc">埮</text><text x="865.0" y="272" class="bt">e</text><text x="872.5" y="272" class="bc">彄</text><text x="887.5" y="272" class="bc">彄</text><text x="902.5" y="272" class="bt">Q</text></g></svg><svg style="left:0;top:0" width="1024" height="768"><g clip-path="url(#cv)"><text x="229" y="486" class="lb" fill="#000" text-anchor="middle">Y1</text><rect x="206" y="487" width="56" height="49" fill="#000"/><rect x="260" y="475" width="473" height="49" fill="#000"/><path d="M206 528.5h55v-32.5h160" stroke="#e8102a" stroke-width="2" fill="none"/><path d="M287.5 491h5" stroke="#fff" stroke-width="0"/><path d="M287 491v10M293 491v10M285 501l10-10" stroke="#e8102a" stroke-width="1.1" fill="none"/><text x="290" y="488" class="lb" fill="#e8102a" text-anchor="middle">X3</text><circle cx="431" cy="496" r="10" fill="#000" stroke="#e8102a" stroke-width="1.5"/><text x="431" y="499" class="lb" fill="#e8102a" text-anchor="middle">M0</text><rect x="600" y="473" width="54" height="54" rx="1" fill="#000"/><rect x="602" y="498" width="51" height="26" fill="#00ee00"/><circle cx="610" cy="526" r="3.5" fill="#000"/><circle cx="646" cy="526" r="3.5" fill="#000"/></g></svg>
<!-- STATUS BAR -->
<div class="a" style="left:0;top:715px;width:1024px;height:1px;background:#fff"></div>
<div class="t" style="left:2px;top:720px;font-size:15px">获得帮助，按 <span style="font-size:12px">F1</span></div>
<div class="sk" style="left:852px;top:719px;width:103px;height:17px"></div>
<div class="t" style="left:854px;top:721px;font-size:13px;letter-spacing:-0.4px">x=222.1 y=146.4</div>
<div class="sk" style="left:957px;top:719px;width:66px;height:17px"></div>
<div class="t" style="left:959px;top:720px;font-size:15px">未知大小</div>
<!-- TASKBAR -->
<div class="a" style="left:0;top:738px;width:1024px;height:30px;background:#d4d0c8;border-top:1px solid #d4d0c8"></div>
<div class="a" style="left:0;top:739px;width:1024px;height:1px;background:#fff"></div>
<div class="rb" style="left:2px;top:741px;width:62px;height:25px"></div>
<svg style="left:8px;top:746px" width="16" height="15"><path d="M2 1c2-1 4 0 6 1v6c-2-1-4-2-6-1z" fill="#e03020"/><path d="M9 2c2 1 4 1 6 0v6c-2 1-4 1-6 0z" fill="#20a020"/><path d="M1 8c2-1 4 0 6 1v6c-2-1-4-2-6-1z" fill="#2040e0"/><path d="M8 9c2 1 4 1 6 0v6c-2 1-4 1-6 0z" fill="#f0c000"/><path d="M0 3h1M0 6h1M0 10h1M0 13h1" stroke="#000"/></svg>
<div class="t" style="left:27px;top:745px;font-size:16px">开始</div>
<div class="sep" style="left:67px;top:742px;height:24px"></div>
<div class="grip" style="left:71px;top:743px;height:22px"></div>
<svg style="left:80px;top:745px" width="17" height="17"><path d="M8 1c5 0 8 3 8 8s-4 7-8 7-7-3-7-7c0-3 2-5 4-6" fill="#e02020"/><path d="M8 5c-2 0-3 2-3 4s1 3 3 3 3-1 3-3h-3" fill="none" stroke="#fff" stroke-width="2"/></svg>
<svg style="left:103px;top:745px" width="17" height="17"><rect x="0.5" y="0.5" width="16" height="16" fill="#a0c040" stroke="#608020"/><circle cx="8.5" cy="10" r="5.5" fill="#f06030"/><path d="M5 4l4 3 4-5" stroke="#fff" stroke-width="1.5" fill="none"/></svg>
<svg style="left:126px;top:744px" width="16" height="18"><ellipse cx="8" cy="7" rx="5" ry="6" fill="#000"/><ellipse cx="8" cy="12" rx="6" ry="5" fill="#000"/><ellipse cx="8" cy="13" rx="4" ry="3.5" fill="#fff"/><path d="M4 10h8l-1 2h-6z" fill="#e02020"/><path d="M6 6h4l-2 2z" fill="#f0b000"/><ellipse cx="4" cy="17" rx="3" ry="1" fill="#f0b000"/><ellipse cx="12" cy="17" rx="3" ry="1" fill="#f0b000"/></svg>
<svg style="left:149px;top:744px" width="17" height="18"><path d="M3 4c2-3 6-3 8 0l3 8c0 3-3 5-6 5s-5-3-5-6z" fill="#40c020" stroke="#206010" stroke-width="0.6"/><circle cx="4" cy="5" r="2" fill="#e02020"/><path d="M9 8l5 8" stroke="#a0e040" stroke-width="2"/></svg>
<svg style="left:172px;top:745px" width="17" height="17"><rect x="0.5" y="0.5" width="16" height="16" fill="#60b030"/><circle cx="8.5" cy="9" r="6" fill="#f08020"/><ellipse cx="8.5" cy="10" rx="4" ry="3.5" fill="#fff"/><circle cx="7" cy="10" r="0.8" fill="#4040c0"/><circle cx="10" cy="10" r="0.8" fill="#4040c0"/></svg>
<svg style="left:195px;top:745px" width="17" height="17"><circle cx="8.5" cy="8.5" r="8" fill="#e86818"/><circle cx="9" cy="7.5" r="5" fill="#2860b0"/><path d="M3 3c3 1 4 4 4 7 2 0 4 1 5 3-4 3-9 2-11-2z" fill="#f09020"/></svg>
<div class="sep" style="left:228px;top:742px;height:24px"></div>
<div class="grip" style="left:232px;top:743px;height:22px"></div>
<div class="rb" style="left:239px;top:741px;width:160px;height:25px"></div>
<svg style="left:244px;top:745px" width="16" height="16"><circle cx="8" cy="8" r="7.5" fill="#e86818"/><circle cx="8.5" cy="7" r="4.5" fill="#2860b0"/><path d="M2 3c3 1 4 4 4 7 2 0 4 1 5 3-4 3-9 2-10-2z" fill="#f09020"/></svg>
<div class="t" style="left:262px;top:745px;font-size:15px">Flash制作的PLC...</div>
<div class="rb" style="left:402px;top:741px;width:160px;height:25px"></div>
<svg style="left:406px;top:746px" width="16" height="14"><path d="M0.5 4.5h14v9h-14z" fill="#f0e080" stroke="#606000"/><path d="M3 4l3-3 6 3" fill="#fff" stroke="#606000"/><path d="M0.5 13.5l3-6h12l-3 6z" fill="#c0b040" stroke="#606000"/></svg>
<div class="t" style="left:427px;top:745px;font-size:16px">我的文档</div>
<div class="rb" style="left:565px;top:741px;width:161px;height:25px"></div>
<svg style="left:568px;top:745px" width="16" height="16"><path d="M2 14L7 2l6 10z" fill="#e05a10"/><path d="M7 2l6 10-3 2z" fill="#8a2d8a"/><circle cx="6" cy="9" r="3.5" fill="#f0a030"/></svg>
<div class="t" style="left:589px;top:745px;font-size:16px">影片 1 - SWiSH...</div>
<div class="sk" style="left:843px;top:741px;width:180px;height:26px"></div>
<svg style="left:0;top:0" width="1024" height="768">
<path d="M847 752l5-4h8l-2 6h-8z" fill="#606060" stroke="#000" stroke-width="0.6"/><path d="M849 755v2M852 755v2M855 755v2" stroke="#000"/>
<circle cx="870" cy="751" r="5" fill="#60b040"/><path d="M867 748l6 6M873 748l-6 6" stroke="#e0e000" stroke-width="1.5"/>
<path d="M879 749h3l4-4v13l-4-4h-3z" fill="#e0d080" stroke="#000" stroke-width="0.6"/><path d="M888 748c2 2 2 5 0 7M890 746c3 3 3 8 0 11" stroke="#000" fill="none" stroke-width="0.8"/>
<path d="M898 756l4-4M902 749l4-4M900 758v-6h6v-6" stroke="#000" stroke-width="1.2" fill="none"/><rect x="904" y="745" width="3" height="3" fill="#fff" stroke="#000" stroke-width="0.5"/>
<rect x="912" y="745" width="13" height="13" fill="#fff"/><path d="M913 745v13M913 752l7-7M915 751l6 7" stroke="#e00000" stroke-width="3"/><rect x="920" y="753" width="4" height="4" fill="#000"/>
<rect x="927" y="748" width="16" height="10" fill="#00a0c0" stroke="#000" stroke-width="0.8"/><circle cx="935" cy="753" r="3" fill="#fff" stroke="#000" stroke-width="0.8"/><rect x="929" y="746" width="4" height="2" fill="#000"/>
</svg>
<div class="t" style="left:962px;top:747px;font-size:16px">19:16</div>
</body></html>
